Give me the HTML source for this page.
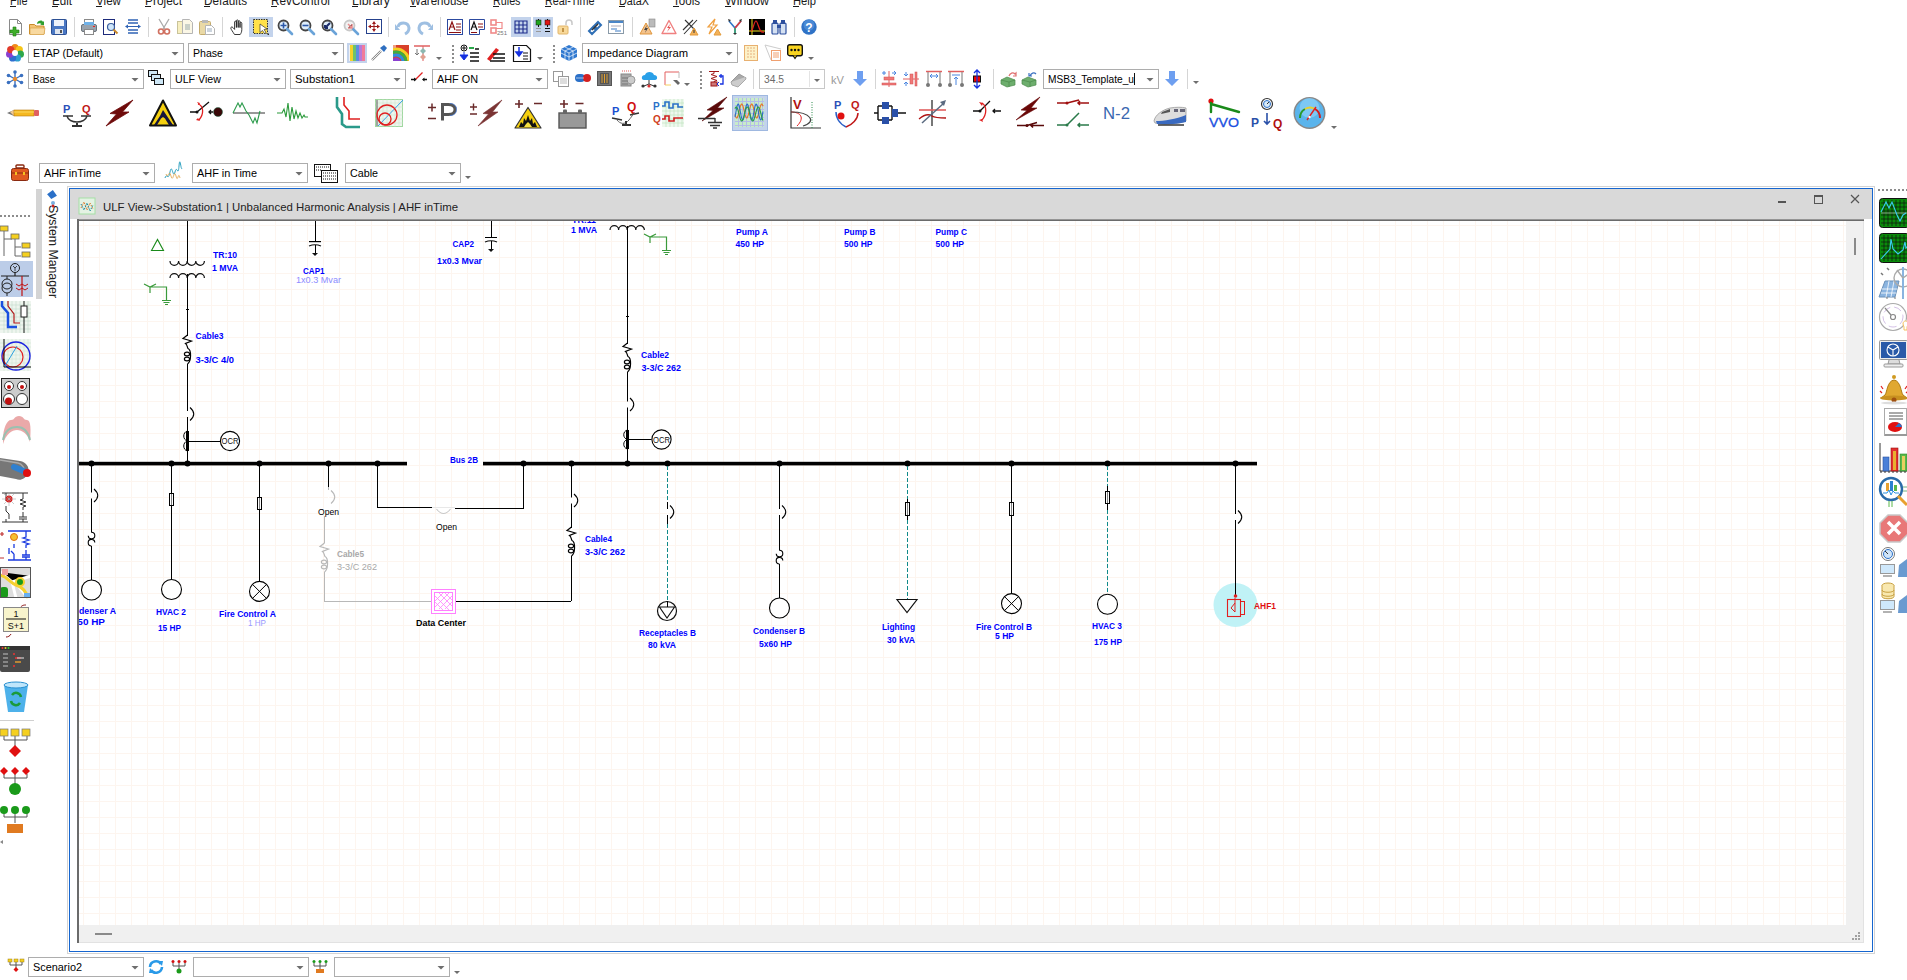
<!DOCTYPE html>
<html><head><meta charset="utf-8"><style>
html,body{margin:0;padding:0;background:#fff;overflow:hidden;width:1907px;height:980px}
svg{display:block;font-family:"Liberation Sans", sans-serif}
</style></head><body>
<svg width="1907" height="980" viewBox="0 0 1907 980">
<text x="10" y="5" font-size="12" fill="#1a1a1a" font-weight="normal" text-anchor="start" textLength="17.5" lengthAdjust="spacingAndGlyphs" >File</text><rect x="10" y="6" width="6" height="1" fill="#1a1a1a"/><text x="52" y="5" font-size="12" fill="#1a1a1a" font-weight="normal" text-anchor="start" textLength="20" lengthAdjust="spacingAndGlyphs" >Edit</text><rect x="52" y="6" width="6" height="1" fill="#1a1a1a"/><text x="96" y="5" font-size="12" fill="#1a1a1a" font-weight="normal" text-anchor="start" textLength="25" lengthAdjust="spacingAndGlyphs" >View</text><rect x="96" y="6" width="6" height="1" fill="#1a1a1a"/><text x="145" y="5" font-size="12" fill="#1a1a1a" font-weight="normal" text-anchor="start" textLength="37" lengthAdjust="spacingAndGlyphs" >Project</text><rect x="145" y="6" width="6" height="1" fill="#1a1a1a"/><text x="204" y="5" font-size="12" fill="#1a1a1a" font-weight="normal" text-anchor="start" textLength="43" lengthAdjust="spacingAndGlyphs" >Defaults</text><rect x="204" y="6" width="6" height="1" fill="#1a1a1a"/><text x="271" y="5" font-size="12" fill="#1a1a1a" font-weight="normal" text-anchor="start" textLength="59" lengthAdjust="spacingAndGlyphs" >RevControl</text><rect x="271" y="6" width="6" height="1" fill="#1a1a1a"/><text x="352" y="5" font-size="12" fill="#1a1a1a" font-weight="normal" text-anchor="start" textLength="38" lengthAdjust="spacingAndGlyphs" >Library</text><rect x="352" y="6" width="6" height="1" fill="#1a1a1a"/><text x="410" y="5" font-size="12" fill="#1a1a1a" font-weight="normal" text-anchor="start" textLength="58.5" lengthAdjust="spacingAndGlyphs" >Warehouse</text><rect x="410" y="6" width="6" height="1" fill="#1a1a1a"/><text x="493" y="5" font-size="12" fill="#1a1a1a" font-weight="normal" text-anchor="start" textLength="27.5" lengthAdjust="spacingAndGlyphs" >Rules</text><rect x="493" y="6" width="6" height="1" fill="#1a1a1a"/><text x="545" y="5" font-size="12" fill="#1a1a1a" font-weight="normal" text-anchor="start" textLength="49.5" lengthAdjust="spacingAndGlyphs" >Real-Time</text><rect x="545" y="6" width="6" height="1" fill="#1a1a1a"/><text x="619" y="5" font-size="12" fill="#1a1a1a" font-weight="normal" text-anchor="start" textLength="30" lengthAdjust="spacingAndGlyphs" >DataX</text><rect x="619" y="6" width="6" height="1" fill="#1a1a1a"/><text x="673" y="5" font-size="12" fill="#1a1a1a" font-weight="normal" text-anchor="start" textLength="27" lengthAdjust="spacingAndGlyphs" >Tools</text><rect x="673" y="6" width="6" height="1" fill="#1a1a1a"/><text x="725" y="5" font-size="12" fill="#1a1a1a" font-weight="normal" text-anchor="start" textLength="44" lengthAdjust="spacingAndGlyphs" >Window</text><rect x="725" y="6" width="6" height="1" fill="#1a1a1a"/><text x="793" y="5" font-size="12" fill="#1a1a1a" font-weight="normal" text-anchor="start" textLength="23" lengthAdjust="spacingAndGlyphs" >Help</text><rect x="793" y="6" width="6" height="1" fill="#1a1a1a"/><g transform="translate(8,19)"><path d="M1.5 .5h8l4 4v11h-12z" fill="#fff" stroke="#8a8a8a"/><path d="M9.5 .5v4h4" fill="none" stroke="#8a8a8a"/><path d="M5 8h3v3h3v3h-3v3h-3v-3h-3v-3h3z" fill="#3fae2a" stroke="#1d7a12" stroke-width=".6"/></g><g transform="translate(29,19)"><path d="M.5 5.5h5l1.5 1.5h8v8h-14.5z" fill="#f3c475" stroke="#c88a2a"/><path d="M1 9h15l-1 6.5h-14z" fill="#f8d9a0" stroke="#d49a3a" stroke-width=".6"/><path d="M8 4c2-3 5-3 6-1l1-1v4h-4l1.5-1c-1-1-3-1-4 0z" fill="#2e9e2e"/></g><g transform="translate(51,19)"><rect x=".5" y=".5" width="15" height="15" rx="1" fill="#4a78c4" stroke="#2b4f93"/><rect x="3" y="1" width="10" height="6" fill="#eef3fb"/><rect x="4" y="10" width="8" height="5" fill="#dfe5ee"/><rect x="9" y="11" width="2" height="3" fill="#555"/></g><rect x="74" y="17" width="1" height="20" fill="#d5d5d5"/><g transform="translate(81,19)"><rect x="3.5" y=".5" width="9" height="5" fill="#fff" stroke="#8a8a8a"/><rect x=".5" y="5.5" width="15" height="7" rx="1.5" fill="#9aa3ad" stroke="#6d747b"/><rect x="3" y="3" width="10" height="3" fill="#6fb1e8"/><rect x="3.5" y="10.5" width="9" height="5" fill="#fff" stroke="#8a8a8a"/><rect x="12" y="7" width="2" height="1" fill="#e22"/></g><g transform="translate(103,19)"><rect x=".5" y=".5" width="11" height="15" fill="#fff" stroke="#1c2a7a"/><circle cx="8" cy="8" r="3.5" fill="#cfe6fb" stroke="#3b5f9e" stroke-width="1.2"/><path d="M10.5 10.5l4 4" stroke="#c98a2c" stroke-width="2"/></g><g transform="translate(125,19)"><path d="M3 1h10M3 4h10M3 11h10M3 14h10" stroke="#2f63b5" stroke-width="1.5"/><path d="M0 7.5l3-2v4zM16 7.5l-3-2v4z" fill="#2f63b5"/><path d="M3 7.5h10" stroke="#2f63b5"/></g><rect x="148" y="17" width="1" height="20" fill="#d5d5d5"/><g transform="translate(157,19)"><path d="M2 0l6 10M12 0l-6 10" stroke="#aaa" stroke-width="1.3"/><circle cx="4" cy="12.5" r="2.5" fill="none" stroke="#d07060" stroke-width="1.6"/><circle cx="10" cy="12.5" r="2.5" fill="none" stroke="#d07060" stroke-width="1.6"/></g><g transform="translate(177,19)"><rect x=".5" y="2.5" width="9" height="12" fill="#f7efc0" stroke="#c9c39a"/><path d="M5.5 .5h7l3 3v11h-10z" fill="#fbf7e6" stroke="#b5b5b5"/><path d="M8 6h5M8 8h5M8 10h5" stroke="#9aa"/></g><g transform="translate(199,19)"><rect x=".5" y="2.5" width="11" height="13" rx="1" fill="#e9d9a6" stroke="#c3ab6d"/><rect x="3" y="1" width="6" height="3" fill="#b9b9b9"/><path d="M6.5 6.5h6l3 3v6h-9z" fill="#fff" stroke="#b5b5b5"/><path d="M8 10h5M8 12h5" stroke="#9ab"/></g><rect x="222" y="17" width="1" height="20" fill="#d5d5d5"/><g transform="translate(230,19)"><path d="M4.5 15.5C3 13 1 10.5.8 9.2c-.2-1.2 1.3-1.6 2.2-.6l1.6 1.8V3c0-1.2 1.8-1.2 1.8 0v5.5V1.8c0-1.2 1.8-1.2 1.8 0v6.7V2.6c0-1.2 1.8-1.2 1.8 0v6V4.2c0-1.2 1.8-1.2 1.8 0v6.3c0 2.5-.8 3.8-1.6 5z" fill="#fff" stroke="#222" stroke-width=".9" stroke-linejoin="round"/></g><rect x="249" y="17" width="24" height="20" fill="#c3d3ec"/><g transform="translate(253,19)"><rect x=".5" y=".5" width="14" height="14" fill="#ffe14a" stroke="#333" stroke-dasharray="1.5 1"/><path d="M7 5l7 5-3 .5 2 3-1.5 1-2-3-2.5 2z" fill="#fff" stroke="#333" stroke-width=".7"/><path d="M14 16l2-2v2z" fill="#333"/></g><g transform="translate(277,19)"><circle cx="6.5" cy="6.5" r="5" fill="#dfeefb" stroke="#454545" stroke-width="1.8"/><path d="M10 10l5 5" stroke="#6aa3d8" stroke-width="2.6" stroke-linecap="round"/><path d="M3.5 6.5h6M6.5 3.5v6" stroke="#2a57a8" stroke-width="1.6"/></g><g transform="translate(299,19)"><circle cx="6.5" cy="6.5" r="5" fill="#dfeefb" stroke="#454545" stroke-width="1.8"/><path d="M10 10l5 5" stroke="#6aa3d8" stroke-width="2.6" stroke-linecap="round"/><path d="M3.5 6.5h6" stroke="#2a57a8" stroke-width="1.6"/></g><g transform="translate(321,19)"><circle cx="6.5" cy="6.5" r="5" fill="#dfeefb" stroke="#454545" stroke-width="1.8"/><path d="M10 10l5 5" stroke="#6aa3d8" stroke-width="2.6" stroke-linecap="round"/><path d="M9 4l-5 5M4 9v-3M4 9h3" stroke="#1b2c6b" stroke-width="2"/></g><g transform="translate(343,19)"><circle cx="6.5" cy="6.5" r="5" fill="#f2f2f2" stroke="#c8c8c8" stroke-width="1.8"/><path d="M10 10l5 5" stroke="#6aa3d8" stroke-width="2.6" stroke-linecap="round"/><path d="M5 5l4 4M9 5v4h-4" stroke="#ec8c8c" stroke-width="1.4"/></g><g transform="translate(366,19)"><rect x=".5" y=".5" width="15" height="14" fill="#fff" stroke="#25418c"/><path d="M8 2l2 3h-4zM8 13l2-3h-4zM2 7.5l3-2v4zM14 7.5l-3-2v4z" fill="#9b1b1b"/><path d="M8 4v7M4 7.5h8" stroke="#9b1b1b"/></g><rect x="388" y="17" width="1" height="20" fill="#d5d5d5"/><g transform="translate(395,19)"><path d="M3 8c1-5 10-6 11 1c0 3-2 5-4 6" fill="none" stroke="#9ebfe2" stroke-width="3"/><path d="M0 5l5 6h-5z" fill="#9ebfe2"/></g><g transform="translate(417,19)"><path d="M13 8c-1-5-10-6-11 1c0 3 2 5 4 6" fill="none" stroke="#9ebfe2" stroke-width="3"/><path d="M16 5l-5 6h5z" fill="#9ebfe2"/></g><rect x="440" y="17" width="1" height="20" fill="#d5d5d5"/><g transform="translate(447,19)"><rect x=".5" y=".5" width="15" height="15" fill="#fff" stroke="#2c4aa0"/><path d="M2 11l3-8 3 8M3 8h4" fill="none" stroke="#8b1010" stroke-width="1.2"/><path d="M9 5h5M9 8h5M9 11h5M2 13.5h12" stroke="#8b1010" stroke-width="1.2"/></g><g transform="translate(469,19)"><path d=".5 .5" /><path d="M.5 .5h15v10h-5v5h-10z" fill="#fff" stroke="#2c4aa0"/><path d="M2 11l3-8 3 8M3 8h4" fill="none" stroke="#111" stroke-width="1.2"/><path d="M9 5h5M9 8h5M2 13.5h6" stroke="#8b1010" stroke-width="1.2"/></g><g transform="translate(490,19)"><rect x="1" y="1" width="5" height="5" fill="none" stroke="#f08a8a" stroke-width="1.6"/><rect x="1" y="9" width="5" height="5" fill="none" stroke="#f08a8a" stroke-width="1.6"/><path d="M6 3.5h6v6h-6" fill="none" stroke="#f08a8a" stroke-width="1.2"/><text x="7" y="16" font-size="6" fill="#777">251</text></g><rect x="511" y="17" width="20" height="20" fill="#c3d3ec"/><g transform="translate(513,19)"><path d="M2 2h12v12h-12zM2 6h12M2 10h12M6 2v12M10 2v12" fill="none" stroke="#1a2a8a" stroke-width="1.1"/></g><rect x="533" y="17" width="20" height="20" fill="#c3d3ec"/><g transform="translate(535,19)"><rect x="1" y="1" width="5" height="5" fill="#1ea51e" stroke="#111" stroke-width=".5"/><rect x="10" y="1" width="5" height="5" fill="#e01515" stroke="#111" stroke-width=".5"/><path d="M3.5 0v1M12.5 0v1M3.5 6v2M12.5 6v2" stroke="#111"/><path d="M1 10l1-1 1 1 1-1 1 1 1-1M1 13l1-1 1 1 1-1 1 1 1-1" stroke="#999" fill="none"/><path d="M10 10l1-1 1 1 1-1 1 1 1-1M10 13l1-1 1 1 1-1 1 1 1-1" stroke="#111" fill="none"/></g><g transform="translate(557,19)"><path d="M9 6v-2c0-4 6-4 6 0v2" fill="none" stroke="#c8c8c8" stroke-width="1.5"/><rect x="1" y="7" width="10" height="8" rx="1" fill="#f8d99a" stroke="#e2b56a"/><rect x="5" y="9" width="2" height="4" fill="#c39448"/></g><rect x="580" y="17" width="1" height="20" fill="#d5d5d5"/><g transform="translate(587,19)"><path d="M2 12l3 3 4-4-3-3zM7 7l3 3 4-4-3-3z" fill="none" stroke="#2f6fb5" stroke-width="2"/><path d="M5 11l6-6" stroke="#333" stroke-width="1.5"/></g><g transform="translate(608,19)"><rect x=".5" y="1.5" width="15" height="13" fill="#fff" stroke="#8a9aa8"/><rect x="1" y="2" width="14" height="2" fill="#4a86c8"/><path d="M3 7h10" stroke="#aab"/><path d="M3 10h6M7 12h6" stroke="#3f7fc8" stroke-width="1.2"/></g><rect x="632" y="17" width="1" height="20" fill="#d5d5d5"/><g transform="translate(639,19)"><path d="M1 15l6-11 6 11z" fill="#f3c28c" stroke="#e0963c" stroke-linejoin="round"/><path d="M8 6l-3 5h2l-1 3 3-5h-2z" fill="#444"/><rect x="10" y="0" width="6" height="8" fill="#bbb" stroke="#888" stroke-width=".6"/></g><g transform="translate(661,19)"><path d="M1 14.5l7-13 7 13z" fill="#fff" stroke="#f08080" stroke-width="1.4" stroke-linejoin="round"/><path d="M9 5l-3 4h2l-2 4 4-5h-2z" fill="#e85050"/></g><g transform="translate(683,19)"><path d="M1 15l13-14M0 11l10-10M2 1l10 10" stroke="#333" stroke-width="1.1"/><path d="M7 16l4-7 4 7z" fill="#f3b25a" stroke="#e39a3a"/><path d="M11 11v3" stroke="#333"/></g><g transform="translate(706,19)"><path d="M9 0l-7 8h4l-3 7 8-9h-4z" fill="none" stroke="#f0a040" stroke-width="1.2"/><path d="M8 16l3.5-6 3.5 6z" fill="#f3b25a" stroke="#e39a3a"/></g><g transform="translate(727,19)"><path d="M8 9l-6-7M8 9l6-7M8 9v6" stroke-width="1.6" fill="none" stroke="#2f76c8"/><path d="M8 9l6-7" stroke="#e03d3d" stroke-width="1.6"/><path d="M8 9v6" stroke="#3da46d" stroke-width="1.6"/><path d="M1 0l3 1-2 2zM15 0l-3 1 2 2zM6 14h4l-2 2z" fill="#333"/></g><g transform="translate(749,19)"><rect x="0" y="0" width="16" height="16" fill="#000"/><path d="M3 0v16M0 12h16" stroke="#f4e020"/><path d="M2 12c2 0 3-10 5-10s3 13 8 11" fill="none" stroke="#e02020" stroke-width="1.2"/></g><g transform="translate(771,19)"><rect x="1" y="4" width="6" height="11" rx="1" fill="#d5e1f2" stroke="#2c4f9e" stroke-width="1.2"/><rect x="9" y="4" width="6" height="11" rx="1" fill="#d5e1f2" stroke="#2c4f9e" stroke-width="1.2"/><rect x="2" y="1" width="4" height="4" fill="#2c4f9e"/><rect x="10" y="1" width="4" height="4" fill="#2c4f9e"/><rect x="6" y="6" width="4" height="3" fill="#2c4f9e"/></g><rect x="794" y="17" width="1" height="20" fill="#d5d5d5"/><g transform="translate(801,19)"><circle cx="8" cy="8" r="7.7" fill="#2f72c6"/><circle cx="8" cy="6" r="5.5" fill="#5c9ae0" opacity=".6"/><text x="8" y="12.5" font-size="12" font-weight="bold" fill="#fff" text-anchor="middle">?</text></g><g transform="translate(6,44)"><circle cx="9.00" cy="3.50" r="3.6" fill="#f08a1a"/><circle cx="13.30" cy="5.57" r="3.6" fill="#f5c518"/><circle cx="14.36" cy="10.22" r="3.6" fill="#2fa84a"/><circle cx="11.39" cy="13.96" r="3.6" fill="#2f9fd0"/><circle cx="6.61" cy="13.96" r="3.6" fill="#2f6fd0"/><circle cx="3.64" cy="10.22" r="3.6" fill="#8a3fd0"/><circle cx="4.70" cy="5.57" r="3.6" fill="#e23a2a"/><circle cx="9" cy="9" r="3" fill="#fff"/></g><rect x="28.5" y="43.5" width="155" height="19" fill="#fff" stroke="#adadad"/><text x="33" y="57" font-size="11" fill="#000" font-weight="normal" text-anchor="start" textLength="70" lengthAdjust="spacingAndGlyphs" >ETAP (Default)</text><path d="M171.5 52 h7 l-3.5 3.5z" fill="#6e6e6e"/><rect x="188.5" y="43.5" width="155" height="19" fill="#fff" stroke="#adadad"/><text x="193" y="57" font-size="11" fill="#000" font-weight="normal" text-anchor="start" textLength="30" lengthAdjust="spacingAndGlyphs" >Phase</text><path d="M331.5 52 h7 l-3.5 3.5z" fill="#6e6e6e"/><rect x="347" y="43" width="20" height="20" fill="#c3d3ec"/><g transform="translate(349,45)"><rect x="0" y="0" width="16" height="16" fill="#f0f0f0"/><rect x="1" y="0" width="3" height="16" fill="#f4d22a"/><rect x="4" y="0" width="3" height="16" fill="#6dc36d"/><rect x="7" y="0" width="3" height="16" fill="#5a8fe0"/><rect x="10" y="0" width="3" height="16" fill="#b77ad8"/><rect x="13" y="0" width="3" height="16" fill="#f07b9a"/></g><g transform="translate(371,45)"><path d="M1 15l9-9" stroke="#888" stroke-width="2.4"/><path d="M1 15l9-9" stroke="#eee" stroke-width="1"/><path d="M9 3l4-3 3 3-3 4z" fill="#2f6fc0"/></g><clipPath id="rb"><rect x="393" y="45" width="16" height="16"/></clipPath><g clip-path="url(#rb)"><g transform="translate(393,45)"><rect x="0" y="0" width="16" height="16" fill="#d8402a"/><circle cx="3" cy="17" r="13" fill="none" stroke="#f5d020" stroke-width="3"/><circle cx="3" cy="17" r="10" fill="none" stroke="#3fae3f" stroke-width="3"/><circle cx="3" cy="17" r="7" fill="none" stroke="#2f8fe0" stroke-width="3"/><circle cx="3" cy="17" r="4.5" fill="#8a3fd0"/><path d="M0 0h3v3h-3z" fill="#f0a080"/></g></g><g transform="translate(414,45)"><path d="M0 1h16" stroke="#e06060" stroke-width="1.5"/><path d="M9 1v15" stroke="#e06060"/><path d="M9 3l3 3-3 3-3-3z" fill="#8cb8b0"/><path d="M9 9l3 3-3 3-3-3z" fill="#e0a090"/><path d="M3 4v6M1 8l2 2 2-2" stroke="#777" fill="none"/></g><path d="M436 57 h6 l-3 3z" fill="#6e6e6e"/><rect x="452" y="45" width="2" height="2" fill="#8c8c8c"/><rect x="452" y="49" width="2" height="2" fill="#8c8c8c"/><rect x="452" y="53" width="2" height="2" fill="#8c8c8c"/><rect x="452" y="57" width="2" height="2" fill="#8c8c8c"/><rect x="452" y="61" width="2" height="2" fill="#8c8c8c"/><g transform="translate(460,44)"><circle cx="4" cy="4" r="3" fill="none" stroke="#111"/><path d="M4 2v4M2 4h4" stroke="#111"/><path d="M9 4h5" stroke="#2aa84a" stroke-width="2"/><path d="M15 5h4M10 9h9M10 13h9M10 17h9" stroke="#111" stroke-width="1.5"/><path d="M4 8v5M0 11l4 5 4-5z" fill="#1530e0" stroke="#1530e0"/></g><g transform="translate(486,45)"><path d="M1 14l9-11 3 2-9 11z" fill="#e02020"/><path d="M7 9h12M7 13h12M4 16h15" stroke="#111" stroke-width="1.6"/></g><g transform="translate(513,45)"><path d="M.5 .5h13l4 4v12h-17z" fill="#fff" stroke="#111" stroke-width="1.2"/><path d="M6 2v7M3 7l3 4 3-4z" fill="#1530e0" stroke="#1530e0" stroke-width="1.5"/><path d="M10 8h5M10 11h5M10 14h5" stroke="#111"/></g><path d="M537 57 h6 l-3 3z" fill="#6e6e6e"/><rect x="553" y="45" width="2" height="2" fill="#8c8c8c"/><rect x="553" y="49" width="2" height="2" fill="#8c8c8c"/><rect x="553" y="53" width="2" height="2" fill="#8c8c8c"/><rect x="553" y="57" width="2" height="2" fill="#8c8c8c"/><rect x="553" y="61" width="2" height="2" fill="#8c8c8c"/><g transform="translate(561,45)"><path d="M8 0l8 4v8l-8 4-8-4v-8z" fill="#2f78d0"/><path d="M0 4l8 4 8-4M8 8v8M4 2l8 4v8M12 2l-8 4v8M0 8l8 4 8-4" stroke="#fff" stroke-width=".7" fill="none"/></g><rect x="582.5" y="43.5" width="155" height="19" fill="#fff" stroke="#adadad"/><text x="587" y="57" font-size="11" fill="#000" font-weight="normal" text-anchor="start" textLength="101" lengthAdjust="spacingAndGlyphs" >Impedance Diagram</text><path d="M725.5 52 h7 l-3.5 3.5z" fill="#6e6e6e"/><g transform="translate(744,45)"><rect x=".5" y=".5" width="13" height="15" fill="#fdf2c8" stroke="#e8b070"/><path d="M3 3h8M3 6h8M3 9h8M3 12h8" stroke="#e6b080" stroke-dasharray="2 1"/></g><g transform="translate(765,45)"><path d="M0 0l16 4" stroke="#ccc"/><path d="M0 0l6 15" stroke="#ccc"/><rect x="6.5" y="5.5" width="9" height="10" fill="#fff" stroke="#f0a070"/><path d="M8 8h6M8 10h6M8 12h6" stroke="#f0a070"/></g><g transform="translate(787,44)"><rect x=".7" y=".7" width="14.6" height="11" rx="2" fill="#f8d420" stroke="#111" stroke-width="1.4"/><path d="M6 11.5l2 3 2-3" fill="#f8d420" stroke="#111" stroke-width="1.2"/><circle cx="4.5" cy="6" r="1.2" fill="#111"/><circle cx="8" cy="6" r="1.2" fill="#111"/><circle cx="11.5" cy="6" r="1.2" fill="#111"/></g><path d="M808 57 h6 l-3 3z" fill="#6e6e6e"/><g transform="translate(6,70)"><path d="M9 1v16M2 5l14 8M16 5l-14 8" stroke="#3a70c0" stroke-width="1.4"/><circle cx="9" cy="9" r="2.2" fill="#e68a2e"/><circle cx="9" cy="2" r="1.8" fill="#3a70c0"/><circle cx="9" cy="16" r="1.8" fill="#3a70c0"/><circle cx="2.5" cy="5.5" r="1.8" fill="#3a70c0"/><circle cx="15.5" cy="5.5" r="1.8" fill="#3a70c0"/><circle cx="2.5" cy="12.5" r="1.8" fill="#3a70c0"/><circle cx="15.5" cy="12.5" r="1.8" fill="#3a70c0"/></g><rect x="28.5" y="69.5" width="115" height="19" fill="#fff" stroke="#adadad"/><text x="33" y="83" font-size="11" fill="#000" font-weight="normal" text-anchor="start" textLength="22" lengthAdjust="spacingAndGlyphs" >Base</text><path d="M131.5 78 h7 l-3.5 3.5z" fill="#6e6e6e"/><g transform="translate(148,70)"><rect x=".5" y=".5" width="9" height="6" fill="#cde6f5" stroke="#111"/><rect x="3.5" y="4.5" width="9" height="6" fill="#cde6f5" stroke="#111"/><rect x="6.5" y="8.5" width="9" height="6" fill="#cde6f5" stroke="#111"/></g><rect x="170.5" y="69.5" width="115" height="19" fill="#fff" stroke="#adadad"/><text x="175" y="83" font-size="11" fill="#000" font-weight="normal" text-anchor="start" textLength="46" lengthAdjust="spacingAndGlyphs" >ULF View</text><path d="M273.5 78 h7 l-3.5 3.5z" fill="#6e6e6e"/><rect x="290.5" y="69.5" width="115" height="19" fill="#fff" stroke="#adadad"/><text x="295" y="83" font-size="11" fill="#000" font-weight="normal" text-anchor="start" textLength="60" lengthAdjust="spacingAndGlyphs" >Substation1</text><path d="M393.5 78 h7 l-3.5 3.5z" fill="#6e6e6e"/><g transform="translate(411,71)"><path d="M0 8.5h5M12 8.5h4" stroke="#111" stroke-width="1.3"/><path d="M4.5 8.5l7-7" stroke="#e02020" stroke-width="1.2"/><path d="M3 6.5l2.5 2-2.5 2zM11 8.5l2.5-2v4z" fill="#111"/></g><rect x="432.5" y="69.5" width="115" height="19" fill="#fff" stroke="#adadad"/><text x="437" y="83" font-size="11" fill="#000" font-weight="normal" text-anchor="start" textLength="41" lengthAdjust="spacingAndGlyphs" >AHF ON</text><path d="M535.5 78 h7 l-3.5 3.5z" fill="#6e6e6e"/><g transform="translate(553,71)"><rect x=".5" y=".5" width="9" height="10" fill="#fff" stroke="#999"/><rect x="5.5" y="5.5" width="10" height="10" fill="#fff" stroke="#999"/><path d="M7 8h7M7 10h7M7 12h7" stroke="#bbb"/></g><g transform="translate(575,72)"><rect x="0" y="2" width="10" height="8" rx="4" fill="#2a70c8"/><circle cx="12" cy="6" r="4" fill="#d42020"/><path d="M1 6h8" stroke="#fff" stroke-width=".6"/></g><g transform="translate(597,71)"><rect x=".5" y=".5" width="14" height="14" fill="#777" stroke="#555"/><rect x="3" y="2" width="9" height="11" fill="#555"/><path d="M5 3v9M7.5 3v9M10 3v9" stroke="#e0a030"/></g><g transform="translate(620,71)"><path d="M2 0h10" stroke="#e36060" stroke-dasharray="1 1"/><rect x="1" y="3" width="10" height="12" fill="#aaa" stroke="#888"/><circle cx="11" cy="9" r="4" fill="#ccc" stroke="#999"/><path d="M2 7h6M2 10h6M2 13h6" stroke="#777"/></g><g transform="translate(641,71)"><path d="M3 9c-3 0-3-5 1-5 1-4 8-4 9 0 4 0 4 5 1 5z" fill="#2aa0e8"/><path d="M8 9v4M8 13l-5 2M8 13l5 2" stroke="#333"/><circle cx="2" cy="15" r="1.6" fill="#333"/><circle cx="8" cy="15" r="1.6" fill="#d33"/><circle cx="14" cy="15" r="1.6" fill="#333"/></g><g transform="translate(664,71)"><path d="M1 14v-13h14" fill="none" stroke="#e36060" stroke-width="1"/><path d="M1 14h6" stroke="#f5d060"/><path d="M15 1v6" stroke="#bbb"/><path d="M9 9l5 5 2-2-3-3z" fill="#666"/></g><path d="M684 83 h6 l-3 3z" fill="#6e6e6e"/><rect x="700" y="71" width="2" height="2" fill="#8c8c8c"/><rect x="700" y="75" width="2" height="2" fill="#8c8c8c"/><rect x="700" y="79" width="2" height="2" fill="#8c8c8c"/><rect x="700" y="83" width="2" height="2" fill="#8c8c8c"/><rect x="700" y="87" width="2" height="2" fill="#8c8c8c"/><g transform="translate(708,71)"><path d="M1 .5h10M6 .5v2l-3 1 6 2-6 2 6 2-3 1v2" stroke="#a01818" fill="none"/><rect x="3" y="11" width="6" height="4" fill="#c77" stroke="#a01818"/><path d="M11 5h4v8h-3M13 3v4M11 5h4" stroke="#1530e0" fill="none" stroke-width="1.3"/><path d="M11 11l-2 2 2 2" stroke="#1530e0" fill="none"/></g><g transform="translate(730,72)"><path d="M1 10l8-8 7 4-8 8z" fill="#aaa" stroke="#999"/><path d="M1 10l1 3 6 2 8-8-.5-2" fill="#ccc" stroke="#aaa"/></g><rect x="753" y="69" width="1" height="20" fill="#d5d5d5"/><rect x="759.5" y="69.5" width="65" height="19" fill="#fff" stroke="#c8c8c8"/><rect x="809" y="71" width="1" height="16" fill="#e4e4e4"/><text x="764" y="83" font-size="11" fill="#6a6a6a" font-weight="normal" text-anchor="start" textLength="20" lengthAdjust="spacingAndGlyphs" >34.5</text><path d="M814 79 h6 l-3 3z" fill="#6e6e6e"/><text x="831" y="84" font-size="11" fill="#9a9a9a" font-weight="normal" text-anchor="start" textLength="13" lengthAdjust="spacingAndGlyphs" >kV</text><g transform="translate(853,71)"><path d="M4 0h6v8h4l-7 7-7-7h4z" fill="#6e9ff0"/></g><rect x="875" y="69" width="1" height="20" fill="#d5d5d5"/><g transform="translate(882,71)"><path d="M7 0v16" stroke="#e06060"/><rect x="2" y="6" width="10" height="3" fill="#f07878" stroke="#d05050" stroke-width=".5"/><rect x="0" y="12" width="14" height="2" fill="#f07878" stroke="#d05050" stroke-width=".5"/><path d="M0 2h4M2 0v4M10 2h4M12 0l2 2-2 2" stroke="#4a86e0" fill="none"/></g><g transform="translate(903,71)"><path d="M0 8h16" stroke="#e06060"/><rect x="7" y="3" width="3" height="10" fill="#f07878" stroke="#d05050" stroke-width=".5"/><rect x="12" y="1" width="2" height="14" fill="#f07878" stroke="#d05050" stroke-width=".5"/><path d="M3 1v4M1 3l2 2 2-2M3 15v-4M1 13l2-2 2 2" stroke="#4a86e0" fill="none"/></g><g transform="translate(926,71)"><path d="M0 .5h16" stroke="#e06060" stroke-width="1.5"/><path d="M2 1v12M14 1v12" stroke="#777"/><circle cx="2" cy="14" r="2" fill="#777"/><circle cx="14" cy="14" r="2" fill="#777"/><path d="M4 5h8M4 5l2-2M4 5l2 2M12 5l-2-2M12 5l-2 2" stroke="#4a86e0" fill="none"/></g><g transform="translate(948,71)"><path d="M0 .5h16" stroke="#e06060" stroke-width="1.5"/><path d="M2 1v12M14 1v12" stroke="#777"/><circle cx="2" cy="14" r="2" fill="#777"/><circle cx="14" cy="14" r="2" fill="#777"/><path d="M4 4h8M8 14v-8M6 8l2-2 2 2" stroke="#4a86e0" fill="none"/></g><g transform="translate(972,70)"><rect x="1.5" y="6" width="7" height="6" fill="#e00" stroke="#111"/><path d="M5 0v18M2 3l3-3 3 3M2 15l3 3 3-3" stroke="#1530e0" fill="none" stroke-width="1.3"/></g><rect x="993" y="69" width="1" height="20" fill="#d5d5d5"/><g transform="translate(1001,72)"><path d="M0 8l6-3 8 3v5l-8 2-6-3z" fill="#6dae6d" stroke="#4a8a4a" stroke-width=".7"/><path d="M0 8l8 2 6-2M8 10v5" stroke="#4a8a4a" fill="none" stroke-width=".7"/><path d="M8 4c1-3 4-4 6-2l1-1v3h-3" stroke="#e07070" fill="none" stroke-width="1.2"/></g><g transform="translate(1022,72)"><path d="M0 8l6-3 8 3v5l-8 2-6-3z" fill="#6dae6d" stroke="#4a8a4a" stroke-width=".7"/><path d="M0 8l8 2 6-2M8 10v5" stroke="#4a8a4a" fill="none" stroke-width=".7"/><path d="M8 4c1-3 4-4 6-2M7 1v3h3" stroke="#3a70c0" fill="none" stroke-width="1.2"/></g><rect x="1043.5" y="69.5" width="115" height="19" fill="#fff" stroke="#adadad"/><text x="1048" y="83" font-size="11" fill="#000" font-weight="normal" text-anchor="start" textLength="86" lengthAdjust="spacingAndGlyphs" >MSB3_Template_u</text><path d="M1146.5 78 h7 l-3.5 3.5z" fill="#6e6e6e"/><rect x="1134" y="73" width="1" height="12" fill="#111"/><g transform="translate(1166,71)"><path d="M3 0h6v8h4l-7 7-7-7h4z" fill="#6e9ff0"/></g><rect x="1187" y="69" width="1" height="20" fill="#d5d5d5"/><path d="M1193 81 h6 l-3 3z" fill="#6e6e6e"/><g transform="translate(11,165)"><rect x="5" y="0" width="8" height="3" rx="1" fill="none" stroke="#8a2a10" stroke-width="1.4"/><rect x=".5" y="3.5" width="17" height="12" rx="2" fill="#e05a20" stroke="#8a2a10"/><path d="M1 8h16" stroke="#8a2a10"/><rect x="4" y="7" width="2" height="3" fill="#f5c020"/><rect x="12" y="7" width="2" height="3" fill="#f5c020"/></g><rect x="39.5" y="163.5" width="115" height="19" fill="#fff" stroke="#adadad"/><text x="44" y="177" font-size="11" fill="#000" font-weight="normal" text-anchor="start" textLength="57" lengthAdjust="spacingAndGlyphs" >AHF inTime</text><path d="M142.5 172 h7 l-3.5 3.5z" fill="#6e6e6e"/><g transform="translate(165,166)"><path d="M0 12c2-6 3 4 5-6s3 8 5 0 3 6 4-6 2 6 3 2" fill="none" stroke="#2aa0c0" stroke-width="1"/><path d="M1 8c2 6 3-6 5 2s3-8 5 0 2-6 4 2" fill="none" stroke="#e0a040" stroke-width=".8"/></g><rect x="192.5" y="163.5" width="115" height="19" fill="#fff" stroke="#adadad"/><text x="197" y="177" font-size="11" fill="#000" font-weight="normal" text-anchor="start" textLength="60" lengthAdjust="spacingAndGlyphs" >AHF in Time</text><path d="M295.5 172 h7 l-3.5 3.5z" fill="#6e6e6e"/><g transform="translate(314,164)"><rect x=".5" y=".5" width="16" height="12" fill="#fff" stroke="#111"/><rect x="7.5" y="6.5" width="16" height="12" fill="#fff" stroke="#111"/><path d="M2 3h13M2 6h5M9 9h13M9 12h13M9 15h13" stroke="#111" stroke-dasharray="1 1"/></g><rect x="345.5" y="163.5" width="115" height="19" fill="#fff" stroke="#adadad"/><text x="350" y="177" font-size="11" fill="#000" font-weight="normal" text-anchor="start" textLength="28" lengthAdjust="spacingAndGlyphs" >Cable</text><path d="M448.5 172 h7 l-3.5 3.5z" fill="#6e6e6e"/><path d="M465 176 h6 l-3 3z" fill="#6e6e6e"/><rect x="28.5" y="957.5" width="115" height="19" fill="#fff" stroke="#adadad"/><text x="33" y="971" font-size="11" fill="#000" font-weight="normal" text-anchor="start" textLength="49" lengthAdjust="spacingAndGlyphs" >Scenario2</text><path d="M131.5 966 h7 l-3.5 3.5z" fill="#6e6e6e"/><g transform="translate(8,959)"><rect x="0" y="0" width="4" height="3" fill="#f5d020" stroke="#a08010" stroke-width=".5"/><rect x="6" y="0" width="4" height="3" fill="#f5d020" stroke="#a08010" stroke-width=".5"/><rect x="12" y="0" width="4" height="3" fill="#f5d020" stroke="#a08010" stroke-width=".5"/><path d="M2 3v3h12v-3M8 3v6" stroke="#555" fill="none"/><path d="M8 8l2.5 2.5-2.5 2.5-2.5-2.5z" fill="#e01010"/></g><g transform="translate(148,959)"><path d="M2 8a6 6 0 0 1 11-3M14 8a6 6 0 0 1-11 3" fill="none" stroke="#2a9ae8" stroke-width="2.6"/><path d="M10 2l5 0-1 5zM6 14h-5l1-5z" fill="#2a9ae8"/></g><g transform="translate(171,960)"><circle cx="2" cy="1.5" r="1.5" fill="#d01010"/><circle cx="8" cy="1.5" r="1.5" fill="#d01010"/><circle cx="14" cy="1.5" r="1.5" fill="#d01010"/><path d="M2 3v3h12v-3M8 3v6" stroke="#555" fill="none"/><circle cx="8" cy="11" r="2.5" fill="#1a9a1a"/></g><rect x="193.5" y="957.5" width="115" height="19" fill="#fff" stroke="#adadad"/><path d="M296.5 966 h7 l-3.5 3.5z" fill="#6e6e6e"/><g transform="translate(312,960)"><circle cx="2" cy="1.5" r="1.5" fill="#1a9a1a"/><circle cx="8" cy="1.5" r="1.5" fill="#1a9a1a"/><circle cx="14" cy="1.5" r="1.5" fill="#1a9a1a"/><path d="M2 3v3h12v-3M8 3v6" stroke="#555" fill="none"/><rect x="4" y="9" width="8" height="4" fill="#e07a20"/></g><rect x="334.5" y="957.5" width="115" height="19" fill="#fff" stroke="#adadad"/><path d="M437.5 966 h7 l-3.5 3.5z" fill="#6e6e6e"/><path d="M454 971 h6 l-3 3z" fill="#6e6e6e"/><g transform="translate(7,109)"><path d="M0 4l7-3v6z" fill="#777"/><path d="M3 3l4-2v6z" fill="#f0c890"/><rect x="7" y="1" width="20" height="6" fill="#f5b820" stroke="#b87a10" stroke-width=".6"/><path d="M7 3h20" stroke="#fbd860"/><rect x="27" y="1" width="5" height="6" rx="1" fill="#e06060"/></g><g transform="translate(63,104)"><text x="0" y="9" font-size="11" font-weight="bold" fill="#2a50b8">P</text><text x="19" y="9" font-size="11" font-weight="bold" fill="#c01818">Q</text><path d="M0 12h10M18 12h10" stroke="#333" stroke-width="1.5"/><path d="M4 12c2 8 18 8 20 0" fill="none" stroke="#333" stroke-width="1.5"/><path d="M14 19v3M9 22h10" stroke="#333" stroke-width="2"/></g><g transform="translate(106,100)"><path d="M27 0L4 13.5L10.5 14L0 26L23 12L16.5 12z" fill="#6e0a0a" stroke="#6e0a0a" stroke-width=".8" stroke-linejoin="round"/></g><g transform="translate(149,99)"><path d="M14 1.5L27 26.5H1z" fill="#f5d010" stroke="#111" stroke-width="2" stroke-linejoin="round"/><path d="M5 26L9 20L11 17L13 13L14 11L16 14L18 17L20 20L24 26H20L17.5 22L16 19.5L14 18L12 19.5L10.5 22L8 26z" fill="#14143a"/></g><g transform="translate(190,100)"><path d="M0 12h7M7 12l12-10" stroke="#111" stroke-width="1.3"/><circle cx="7" cy="12" r="1.5" fill="#111"/><path d="M8 4c6 2 6 10 1 16" stroke="#e02020" fill="none" stroke-width="1.3"/><path d="M7 2l3 1-1 2zM6 20l4 1-2-3z" fill="#e02020"/><path d="M19 12h4M21 10l-2 2 2 2" stroke="#111" fill="none" stroke-width="1.3"/><circle cx="28" cy="12" r="4.5" fill="#3a0808" stroke="#1a6a4a" stroke-width=".5"/></g><g transform="translate(233,102)"><path d="M0 11h32" stroke="#333" stroke-width="1"/><path d="M0 11l5-10 2 4 2-4 4 8 3 4 4 8 2-5 2 5 3-12" fill="none" stroke="#2a9a4a" stroke-width="1.1"/></g><g transform="translate(277,102)"><path d="M0 11h5l2-4 2 8 2-14 2 18 2-14 2 12 2-8 2 7 2-5 2 5 2-3 1 2h3" fill="none" stroke="#2a9a3a" stroke-width="1.1"/></g><g transform="translate(335,97)"><path d="M2 0v10l5 7v10l4 3h14" fill="none" stroke="#2a9a8a" stroke-width="2.6"/><path d="M9 0v8l5 6v8h11" fill="none" stroke="#e02020" stroke-width="1.6"/></g><g transform="translate(375,99)"><rect x=".5" y=".5" width="27" height="27" fill="#eef6ee" stroke="#a0d8a0"/><path d="M0 4h28M0 8h28M0 12h28M0 16h28M0 20h28M0 24h28M4 0v28M8 0v28M12 0v28M16 0v28M20 0v28M24 0v28" stroke="#c8e0c8" stroke-width=".5"/><path d="M2 1v26" stroke="#555"/><path d="M3 27l25-26" stroke="#3aa0e8"/><circle cx="12" cy="16" r="10" fill="none" stroke="#e02020" stroke-width="1.3"/><circle cx="10" cy="20" r="6" fill="none" stroke="#e02020" stroke-width="1.3"/></g><g transform="translate(427,103)"><path d="M1 4.5h8M5 .5v8M1 15.5h8" stroke="#6a2a2a" stroke-width="1.5"/><path d="M15.5 17.5V1.5h6c4.5 0 6.5 2.2 6.5 5s-2 5-6.5 5h-6" fill="none" stroke="#555" stroke-width="3"/><path d="M23 .5c4 0 6.5 2.5 6.5 6s-2.5 6-6.5 6" fill="none" stroke="#3a70d0" stroke-width=".8"/></g><g transform="translate(470,100)"><path d="M0 7h7M3.5 3.5v7M0 14h7" stroke="#6a2a2a" stroke-width="1.4"/><path d="M32 0L13 13.5L18.5 14L8 26L28 12L22.5 12z" fill="#7a3434" stroke="#7a3434" stroke-width=".6" stroke-linejoin="round"/></g><g transform="translate(514,100)"><path d="M1 4h8M5 0v8M20 3.5h8" stroke="#6a2a2a" stroke-width="1.6"/><path d="M14 7.5L27 28H1z" fill="#f5d010" stroke="#333" stroke-width="1.2" stroke-linejoin="round"/><path d="M5 27L7 22L9 24L10 18L12 21L14 15L16 21L18 18L19 24L21 22L23 27z" fill="#111"/><path d="M10 27L12 24L14 22L16 24L18 27z" fill="#f5e040"/></g><g transform="translate(558,100)"><path d="M2 4h8M6 0v8M17.5 3.5h8" stroke="#6a2a2a" stroke-width="1.6"/><rect x="1" y="13" width="27" height="15" fill="#999" stroke="#555" stroke-width="1.4"/><rect x="5" y="9.5" width="4" height="4" rx="1" fill="#666"/><rect x="20" y="9.5" width="4" height="4" rx="1" fill="#666"/></g><g transform="translate(612,100)"><text x="0" y="15" font-size="11" font-weight="bold" fill="#1a50d0">P</text><text x="15" y="11" font-size="12" font-weight="bold" fill="#d01010">Q</text><path d="M0 18l10 2M18 15l9-2" stroke="#333" stroke-width="1.6"/><path d="M5 20c3 4 8 5 12 0s4-6 6-7" fill="none" stroke="#666" stroke-width="1"/><path d="M14 21v3M10 25h9" stroke="#333" stroke-width="2"/></g><g transform="translate(653,98)"><rect x="9" y="1" width="22" height="28" fill="#eef8ee"/><path d="M9 5h22M9 9h22M9 13h22M9 17h22M9 21h22M9 25h22M13 1v28M17 1v28M21 1v28M25 1v28M29 1v28" stroke="#b8e0b8" stroke-width=".6"/><text x="0" y="12" font-size="10" font-weight="bold" fill="#2a70c8">P</text><text x="0" y="25" font-size="10" font-weight="bold" fill="#d04020">Q</text><path d="M9 8h3v-4h4v6h4v-4h5v3h5" fill="none" stroke="#2a70c8" stroke-width="1.6"/><path d="M9 21h3v-3h4v5h5v-3h9" fill="none" stroke="#d02020" stroke-width="1.6"/></g><g transform="translate(698,97)"><path d="M29 0L9 13L15 13.5L4 24L26 11L19.5 11z" fill="#5a0a0a" stroke="#5a0a0a" stroke-width=".6" stroke-linejoin="round"/><path d="M0 21.5h17M17 21v4M10 25.5h14M12 28.5h10M15 31h4" stroke="#333" stroke-width="1.4"/></g><rect x="732" y="95" width="36" height="36" fill="#c3d3ec"/><rect x="732.5" y="95.5" width="35" height="35" fill="none" stroke="#9fb8e0"/><g transform="translate(735,98)"><rect x="0" y="0" width="29" height="29" fill="#c8ecc8"/><path d="M0 3.5h29M0 7.5h29M0 11.5h29M0 15.5h29M0 19.5h29M0 23.5h29M0 27.5h29M3.5 0v29M7.5 0v29M11.5 0v29M15.5 0v29M19.5 0v29M23.5 0v29M27.5 0v29" stroke="#b4bce8" stroke-width="1"/><polyline points="0.0,16.4 0.5,18.1 1.0,19.3 1.5,19.9 2.0,19.9 2.5,19.1 3.0,17.8 3.5,16.0 4.0,13.9 4.5,11.7 5.0,9.6 5.5,7.9 6.0,6.7 6.5,6.1 7.0,6.1 7.5,6.9 8.0,8.2 8.5,10.0 9.0,12.1 9.5,14.3 10.0,16.4 10.5,18.1 11.0,19.3 11.5,19.9 12.0,19.9 12.5,19.1 13.0,17.8 13.5,16.0 14.0,13.9 14.5,11.7 15.0,9.6 15.5,7.9 16.0,6.7 16.5,6.1 17.0,6.1 17.5,6.9 18.0,8.2 18.5,10.0 19.0,12.1 19.5,14.3 20.0,16.4 20.5,18.1 21.0,19.3 21.5,19.9 22.0,19.9 22.5,19.1 23.0,17.8 23.5,16.0 24.0,13.9 24.5,11.7 25.0,9.6 25.5,7.9 26.0,6.7 26.5,6.1 27.0,6.1 27.5,6.9 28.0,8.2" fill="none" stroke="#e87a20" stroke-width="1.1"/><polyline points="0.0,18.8 0.5,16.3 1.0,13.5 1.5,10.8 2.0,8.5 2.5,6.9 3.0,6.1 3.5,6.2 4.0,7.3 4.5,9.2 5.0,11.7 5.5,14.5 6.0,17.2 6.5,19.5 7.0,21.1 7.5,21.9 8.0,21.8 8.5,20.7 9.0,18.8 9.5,16.3 10.0,13.5 10.5,10.8 11.0,8.5 11.5,6.9 12.0,6.1 12.5,6.2 13.0,7.3 13.5,9.2 14.0,11.7 14.5,14.5 15.0,17.2 15.5,19.5 16.0,21.1 16.5,21.9 17.0,21.8 17.5,20.7 18.0,18.8 18.5,16.3 19.0,13.5 19.5,10.8 20.0,8.5 20.5,6.9 21.0,6.1 21.5,6.2 22.0,7.3 22.5,9.2 23.0,11.7 23.5,14.5 24.0,17.2 24.5,19.5 25.0,21.1 25.5,21.9 26.0,21.8 26.5,20.7 27.0,18.8 27.5,16.3 28.0,13.5" fill="none" stroke="#2a70c8" stroke-width="1.1"/><polyline points="0.0,10.7 0.5,9.6 1.0,9.1 1.5,9.1 2.0,9.6 2.5,10.7 3.0,12.2 3.5,14.0 4.0,16.0 4.5,18.0 5.0,19.8 5.5,21.3 6.0,22.4 6.5,22.9 7.0,22.9 7.5,22.4 8.0,21.3 8.5,19.8 9.0,18.0 9.5,16.0 10.0,14.0 10.5,12.2 11.0,10.7 11.5,9.6 12.0,9.1 12.5,9.1 13.0,9.6 13.5,10.7 14.0,12.2 14.5,14.0 15.0,16.0 15.5,18.0 16.0,19.8 16.5,21.3 17.0,22.4 17.5,22.9 18.0,22.9 18.5,22.4 19.0,21.3 19.5,19.8 20.0,18.0 20.5,16.0 21.0,14.0 21.5,12.2 22.0,10.7 22.5,9.6 23.0,9.1 23.5,9.1 24.0,9.6 24.5,10.7 25.0,12.2 25.5,14.0 26.0,16.0 26.5,18.0 27.0,19.8 27.5,21.3 28.0,22.4" fill="none" stroke="#2a9a4a" stroke-width="1.1"/></g><g transform="translate(790,97)"><path d="M1 0v31h30" stroke="#333" fill="none" stroke-width="1.2"/><text x="3" y="12" font-size="13" font-weight="bold" fill="#b01010">V</text><path d="M1 15c10 0 14 6 6 14" fill="none" stroke="#e02020" stroke-width="1"/><path d="M1 15c20 0 26 10 12 14" fill="none" stroke="#444" stroke-width="1.2"/><path d="M22 5v26" stroke="#2a8a4a" stroke-dasharray="1 1.5"/></g><g transform="translate(834,99)"><text x="0" y="10" font-size="11" font-weight="bold" fill="#2a50b8">P</text><text x="17" y="10" font-size="11" font-weight="bold" fill="#c01818">Q</text><path d="M2 13c0 8 6 13 10 15" fill="none" stroke="#2a60c8" stroke-width="1.5"/><path d="M12 28c6-2 12-8 12-14" fill="none" stroke="#c01818" stroke-width="1.5"/><circle cx="7" cy="17" r="3.5" fill="#e01010"/></g><g transform="translate(874,102)"><path d="M0 11h4M4 4v14M4 4h14M4 18h14M18 4v14M24 11h8" stroke="#111" stroke-width="1.4" fill="none"/><rect x="8" y="0" width="7" height="7" fill="#2a50a8"/><rect x="8" y="15" width="7" height="7" fill="#2a50a8"/><rect x="18" y="7" width="6" height="8" fill="#2a50a8"/></g><g transform="translate(919,100)"><path d="M13 0v26" stroke="#555" stroke-width="1.6"/><path d="M0 10h27" stroke="#e06060" stroke-width="1.6"/><path d="M0 19c6-5 10-5 13-3s9 2 14 2" stroke="#b01010" fill="none" stroke-width="1.3"/><path d="M3 23l22-20" stroke="#5a6a80" stroke-width="1.5"/><path d="M21 2l6-2-2 6z" fill="#5a6a80"/></g><g transform="translate(973,101)"><path d="M0 10h7M7 10l10-10" stroke="#111" stroke-width="1.3"/><circle cx="7" cy="10" r="1.5" fill="#111"/><path d="M9 2c5 3 5 11 0 17" stroke="#e02020" fill="none" stroke-width="1.3"/><path d="M6 1l4 1-1 3zM6 19l4 2-1-3z" fill="#e02020"/><path d="M20 10h8M22 8l-2 2 2 2" stroke="#111" fill="none" stroke-width="1.3"/></g><g transform="translate(1015,97)"><path d="M25 0L6 13L12 13.5L1 23L22 11L16 11z" fill="#6a0808" stroke="#6a0808" stroke-width=".6" stroke-linejoin="round"/><path d="M2 28.5h10M12 28.5l10-3M17 28.5h12M18 26.5l-2 2 2 2" stroke="#5a0a0a" stroke-width="1.6" fill="none"/><circle cx="12" cy="28.5" r="1.5" fill="#5a0a0a"/></g><g transform="translate(1057,100)"><path d="M0 3h10M10 3l12-3M22 3h10M23 1l-2 2 2 2" stroke="#a01010" stroke-width="1.5" fill="none"/><circle cx="10" cy="3" r="1.5" fill="#a01010"/><path d="M0 25h10M10 25l12-12M22 25h10M23 23l-2 2 2 2" stroke="#2a7a4a" stroke-width="1.5" fill="none"/><circle cx="10" cy="25" r="1.5" fill="#2a7a4a"/></g><text x="1103" y="119" font-size="16" fill="#3a68b0" font-weight="normal" text-anchor="start" textLength="27" lengthAdjust="spacingAndGlyphs" >N-2</text><g transform="translate(1154,103)"><path d="M0 18c1-6 8-11 16-13 6-1 12-1 16 0v13c-8 3-20 4-31 2z" fill="#ddd" stroke="#999" stroke-width=".8"/><path d="M2 18c8 0 20-2 30-6v7c-8 2-20 3-29 2z" fill="#3a6ac0"/><path d="M8 9l8-3v3l-9 2z" fill="#555"/><path d="M20 6h4v3h-4zM26 6h5v3h-5z" fill="#667"/><path d="M4 22h26" stroke="#444" stroke-width="1.6"/></g><g transform="translate(1208,98)"><circle cx="3" cy="3" r="2.6" fill="#e01010"/><path d="M3 5v9M3 6l28 8" stroke="#1a8a1a" stroke-width="2.4" fill="none" stroke-linecap="round"/><text x="1" y="29" font-size="13" fill="#1a50e0" stroke="#1a50e0" stroke-width=".3" textLength="30" lengthAdjust="spacingAndGlyphs">VVO</text></g><g transform="translate(1251,98)"><circle cx="16" cy="6" r="5.5" fill="#fff" stroke="#333" stroke-width="1.2"/><circle cx="16" cy="6" r="3.5" fill="#d8eaf8" stroke="#2a70c8"/><path d="M16 6l2-2" stroke="#333"/><text x="0" y="29" font-size="12" font-weight="bold" fill="#2a50a8">P</text><path d="M16 15v11M13 23l3 3 3-3" stroke="#2a50a8" stroke-width="1.6" fill="none"/><text x="22" y="30" font-size="12" font-weight="bold" fill="#b01010">Q</text></g><g transform="translate(1293,97)"><circle cx="16.5" cy="16" r="16" fill="#888"/><circle cx="16.5" cy="16" r="14.5" fill="#5ab4ec"/><circle cx="16.5" cy="11" r="10" fill="#8cd0f8" opacity=".7"/><path d="M7 21a10 10 0 0 1 5-9" fill="none" stroke="#2a9a2a" stroke-width="2"/><path d="M12 12a10 10 0 0 1 10 0" fill="none" stroke="#e8d030" stroke-width="2"/><path d="M22 12a10 10 0 0 1 5 9" fill="none" stroke="#d02020" stroke-width="2"/><path d="M14 23l9-13" stroke="#e02020" stroke-width="1.4"/><circle cx="16.5" cy="20" r="1.2" fill="#fff"/></g><path d="M1331 126 h6 l-3 3z" fill="#6e6e6e"/><rect x="0" y="215" width="2" height="2" fill="#8c8c8c"/><rect x="4" y="215" width="2" height="2" fill="#8c8c8c"/><rect x="8" y="215" width="2" height="2" fill="#8c8c8c"/><rect x="12" y="215" width="2" height="2" fill="#8c8c8c"/><rect x="16" y="215" width="2" height="2" fill="#8c8c8c"/><rect x="20" y="215" width="2" height="2" fill="#8c8c8c"/><rect x="24" y="215" width="2" height="2" fill="#8c8c8c"/><rect x="28" y="215" width="2" height="2" fill="#8c8c8c"/><rect x="36" y="189" width="6" height="110" fill="#d4d4d4"/><g transform="translate(47,190)"><path d="M5 0l5 5-5 4-5-4z" fill="#2a70c8" transform="rotate(10 5 5)"/><circle cx="6" cy="13" r="2" fill="#7ab0e0"/><circle cx="6" cy="16" r="1.5" fill="#d02020"/></g><text transform="translate(49,205) rotate(90)" font-size="12" fill="#222" textLength="93" lengthAdjust="spacingAndGlyphs">System Manager</text><g transform="translate(0,225)"><rect x="0" y="1" width="8" height="5" fill="#f5d020" stroke="#666" stroke-width=".8"/><path d="M4 6v25M4 14h8M15 14v17M15 22h6M15 31h6" stroke="#666" fill="none"/><rect x="11" y="9" width="8" height="5" fill="#f5d020" stroke="#666" stroke-width=".8"/><rect x="22" y="18" width="8" height="5" fill="#f5d020" stroke="#666" stroke-width=".8"/><rect x="22" y="27" width="8" height="5" fill="#f5d020" stroke="#666" stroke-width=".8"/></g><rect x="0" y="261" width="33" height="36" fill="#bccde8"/><g transform="translate(0,262)"><circle cx="15" cy="6" r="4.5" fill="none" stroke="#222"/><path d="M13 4l2 2 2-2M15 6v3" stroke="#222" fill="none" stroke-width=".8"/><path d="M15 10v4M1 14h28" stroke="#222" stroke-width="1.2"/><path d="M7 14v3M7 31v3" stroke="#222"/><ellipse cx="7" cy="22" rx="5" ry="5" fill="none" stroke="#222"/><ellipse cx="7" cy="26" rx="5" ry="5" fill="none" stroke="#222"/><path d="M22 14v20" stroke="#c01010" stroke-width="1.2"/><path d="M16 22l3 2 3-2 3 2 3-2M16 26l3 2 3-2 3 2 3-2" stroke="#c01010" fill="none" stroke-width="1"/></g><g transform="translate(0,301)"><rect x="0" y="0" width="31" height="32" fill="#eef5ee"/><path d="M0 4h31M0 8h31M0 12h31M0 16h31M0 20h31M0 24h31M0 28h31M4 0v32M8 0v32M12 0v32M16 0v32M20 0v32M24 0v32M28 0v32" stroke="#b9d6c4" stroke-width=".5"/><path d="M2 0v5l6 7v14h9" fill="none" stroke="#1a50e0" stroke-width="2.5"/><path d="M8 0v5l6 8v9h6" fill="none" stroke="#b01818" stroke-width="1.2"/><path d="M24 0v32" stroke="#222"/><rect x="21" y="5" width="6" height="11" fill="#fff" stroke="#222"/></g><g transform="translate(0,339)"><rect x="0" y="0" width="31" height="32" fill="#eef5ee"/><path d="M0 4h31M0 8h31M0 12h31M0 16h31M0 20h31M0 24h31M0 28h31M4 0v32M8 0v32M12 0v32M16 0v32M20 0v32M24 0v32M28 0v32" stroke="#c9e0cf" stroke-width=".5"/><circle cx="16" cy="17" r="14" fill="none" stroke="#1a20e0" stroke-width="1.4"/><circle cx="13" cy="18" r="10" fill="none" stroke="#e02020" stroke-width="1.2"/><path d="M4 0v28h27" stroke="#111" fill="none"/><path d="M5 27l12-20" stroke="#2aa0e0"/></g><g transform="translate(1,378)"><rect x=".5" y=".5" width="28" height="29" fill="#ccc" stroke="#222"/><circle cx="8" cy="8" r="4.5" fill="#fff" stroke="#333"/><circle cx="8" cy="9" r="2" fill="#c01010"/><circle cx="21" cy="8" r="4.5" fill="#fff" stroke="#333"/><circle cx="21" cy="9" r="2" fill="#c01010"/><circle cx="8" cy="21" r="5.5" fill="#fff" stroke="#333"/><circle cx="7.5" cy="23" r="3.5" fill="#c01010"/><circle cx="21" cy="21" r="5.5" fill="#fff" stroke="#333"/></g><g transform="translate(2,416)"><path d="M1 24c0-12 4-20 8-20s3-4 8-4 4 4 8 4 4 10 3 22c-2-8-8-12-13-12s-11 4-14 14z" fill="#e8a0a0" opacity=".9"/><path d="M1 24c2-10 8-13 14-13s11 4 13 13" fill="none" stroke="#9ac0b0" stroke-width="2"/></g><g transform="translate(0,454)"><path d="M0 4l20 3c6 1 10 6 8 12s-8 8-12 6l-16-3z" fill="#777"/><path d="M0 6l18 3c4 1 7 5 6 9" fill="none" stroke="#aaa" stroke-width="1.5"/><path d="M14 13l12 5" stroke="#2f80d0" stroke-width="6" stroke-linecap="round"/><circle cx="27" cy="19" r="4" fill="#e01010"/></g><g transform="translate(2,492)"><path d="M0 1h26M0 30h26M4 1v8M21 1v6l-3 1 6 2-6 2 6 2-3 1v3M21 20v5M17 25h8M17 27h8M21 27v3M4 14v5M4 19l3 3v5M4 27v3" stroke="#333" fill="none"/><circle cx="7" cy="7" r="3.5" fill="#e01010"/><path d="M2 2l10 10M12 2l-10 10M7 0v14M0 7h14" stroke="#aaa" stroke-width=".6"/></g><g transform="translate(0,530)"><path d="M8 1h23M8 30h23M26 1v6l-3 1 6 2-6 2 6 2-3 1v3M26 20v5M22 25h8M22 27h8M26 27v3M14 14v4M9 18v6M14 24l-3-3M14 24v6" stroke="#1a3ae0" fill="none" stroke-width="1.3"/><circle cx="14" cy="7" r="3.5" fill="#f5c030" stroke="#e07010"/><path d="M0 4h4M2 2v4M0 28h4" stroke="#c03030" stroke-width="1.2"/></g><g transform="translate(0,567)"><rect x="0" y="0" width="31" height="31" fill="#ddd"/><path d="M0 5l12 10 19-6M12 15l4 16M16 16l12 15" stroke="#fff" stroke-width="3"/><path d="M0 8c8 2 10 8 16 10s10 6 12 13" stroke="#f5d030" stroke-width="3" fill="none"/><circle cx="20" cy="15" r="4" fill="#1a9a1a" stroke="#f5d030" stroke-width="2"/><rect x="0" y="20" width="8" height="11" fill="#1a9a1a" rx="3"/><rect x="2" y="2" width="6" height="6" fill="#f0a0a0"/><path d="M24 26h7v5h-7z" fill="#6ab0f0"/><rect x=".5" y=".5" width="30" height="30" fill="none" stroke="#555"/></g><g transform="translate(3,605)"><path d="M17 3c2-3 4-3 6-3M3 32c2 0 4-1 5-3" stroke="#8a1010" fill="none"/><rect x=".5" y="2.5" width="25" height="24" fill="#f8f4cc" stroke="#888"/><text x="13" y="12" font-size="9" text-anchor="middle" fill="#111">1</text><path d="M3 14h20" stroke="#111"/><text x="13" y="24" font-size="9" text-anchor="middle" fill="#111">S+1</text></g><g transform="translate(0,646)"><rect x="0" y="0" width="30" height="26" rx="2" fill="#4a4a4a"/><rect x="0" y="0" width="30" height="4" fill="#333"/><circle cx="2.5" cy="2" r="1" fill="#e33"/><circle cx="5.5" cy="2" r="1" fill="#ec3"/><circle cx="8.5" cy="2" r="1" fill="#3c3"/><path d="M3 8h5M3 12h5M3 16h5M3 20h5" stroke="#999" stroke-width="1.4"/><path d="M13 8h2M15 12h6M13 20h2" stroke="#e33" stroke-width="1.4"/><path d="M15 16h6" stroke="#e8a030" stroke-width="1.4"/><path d="M17 12h7" stroke="#bbb" stroke-width="1.4"/></g><g transform="translate(3,681)"><path d="M1 4l4 27h16l4-27z" fill="#3aa8e8" opacity=".9"/><ellipse cx="13" cy="4" rx="12" ry="3" fill="#bfe6fb" stroke="#2a90d0"/><path d="M9 14a5 5 0 0 1 9 2M17 22a5 5 0 0 1-9-2" stroke="#1a9a3a" stroke-width="2.5" fill="none"/></g><rect x="0" y="720" width="34" height="1" fill="#d0d0d0"/><g transform="translate(0,729)"><path d="M4 7v4h23v-4M15 7v10" stroke="#555" fill="none"/><rect x="0" y="0" width="8" height="7" fill="#f5d020" stroke="#777" stroke-width=".7"/><rect x="11" y="0" width="8" height="7" fill="#f5d020" stroke="#777" stroke-width=".7"/><rect x="22" y="0" width="8" height="7" fill="#f5d020" stroke="#777" stroke-width=".7"/><path d="M15 16l6 6-6 6-6-6z" fill="#e01010"/></g><g transform="translate(0,767)"><path d="M4 7v4h23v-4M15 7v10" stroke="#555" fill="none"/><path d="M4 0l4 4-4 4-4-4zM15 0l4 4-4 4-4-4zM26 0l4 4-4 4-4-4z" fill="#e01010"/><circle cx="15" cy="22" r="6" fill="#1a9a1a"/></g><g transform="translate(0,806)"><path d="M4 7v4h23v-4M15 7v10" stroke="#555" fill="none"/><circle cx="4" cy="4" r="4" fill="#1a9a1a"/><circle cx="15" cy="4" r="4" fill="#1a9a1a"/><circle cx="26" cy="4" r="4" fill="#1a9a1a"/><rect x="7" y="18" width="16" height="9" fill="#e07a20"/></g><path d="M0 842l3-2v4z" fill="#888"/><rect x="1878" y="189" width="2" height="2" fill="#8c8c8c"/><rect x="1882" y="189" width="2" height="2" fill="#8c8c8c"/><rect x="1886" y="189" width="2" height="2" fill="#8c8c8c"/><rect x="1890" y="189" width="2" height="2" fill="#8c8c8c"/><rect x="1894" y="189" width="2" height="2" fill="#8c8c8c"/><rect x="1898" y="189" width="2" height="2" fill="#8c8c8c"/><rect x="1902" y="189" width="2" height="2" fill="#8c8c8c"/><rect x="1906" y="189" width="2" height="2" fill="#8c8c8c"/><g transform="translate(1879,198)"><rect x=".5" y=".5" width="30" height="29" rx="3" fill="#0a8a0a" stroke="#111"/><path d="M2 5h28M2 9h28M2 13h28M2 17h28M2 21h28M2 25h28M5 2v26M9 2v26M13 2v26M17 2v26M21 2v26M25 2v26" stroke="#111" stroke-width=".7"/><path d="M2 15h28" stroke="#888" stroke-width="1"/><path d="M2 14l5-10 3 6 3-6 5 13 3 6 3-6 3-2" stroke="#3ad0f0" fill="none" stroke-width="1.1"/></g><g transform="translate(1879,233)"><rect x=".5" y=".5" width="30" height="29" rx="3" fill="#0a8a0a" stroke="#111"/><path d="M2 5h28M2 9h28M2 13h28M2 17h28M2 21h28M2 25h28M5 2v26M9 2v26M13 2v26M17 2v26M21 2v26M25 2v26" stroke="#111" stroke-width=".7"/><path d="M2 26l9-10 1-10 2 10 5 5 5-4 2-8 1 6 3-3" stroke="#3ad0f0" fill="none" stroke-width="1.1"/></g><g transform="translate(1879,267)"><path d="M0 30l6-16h14l-4 16z" fill="#8ab4e0" stroke="#6a90b8"/><path d="M3 22h15M2 26h15M10 14l-3 16M15 14l-3 16" stroke="#fff" stroke-width=".8"/><path d="M8 30v2M16 30v2" stroke="#777"/><circle cx="24" cy="11" r="9" fill="none" stroke="#aaa" stroke-width="1.4"/><path d="M24 0v32" stroke="#8ab4e0" stroke-width="2"/><path d="M24 11l8-6M24 11l-6-8" stroke="#aaa" stroke-width="1.4"/><path d="M2 6l2 2M8 1l2 2" stroke="#777" stroke-width="1.5"/></g><g transform="translate(1879,302)"><circle cx="14" cy="15" r="13.5" fill="#fff" stroke="#aaa" stroke-width="1.2"/><circle cx="14" cy="15" r="10" fill="none" stroke="#c8b0e0" stroke-width=".8" stroke-dasharray="8 4"/><circle cx="14" cy="15" r="2.5" fill="#fff" stroke="#888" stroke-width="1.2"/><path d="M12 13l-6-7" stroke="#888" stroke-width="1.2"/><path d="M24 22c0-4 5-4 5 0l-1 3v3h-3v-3z" fill="#fff" stroke="#f5c060"/></g><g transform="translate(1879,340)"><rect x=".5" y=".5" width="28" height="19" rx="1" fill="#eee" stroke="#999"/><rect x="2" y="2" width="25" height="16" fill="#2a5aa8"/><circle cx="14" cy="10" r="6" fill="none" stroke="#fff" stroke-width="1.1"/><path d="M14 10v6M14 10l-5-3M14 10l5-3" stroke="#fff" stroke-width="1.1"/><path d="M10 20l-1 4h12l-1-4" fill="#ddd" stroke="#999"/><rect x="5" y="24" width="19" height="3" rx="1" fill="#eee" stroke="#999"/></g><g transform="translate(1879,374)"><path d="M6 21c2-2 2-14 9-15 7 1 7 13 9 15l4 3h-26z" fill="#e0a830" stroke="#b07a10"/><ellipse cx="15" cy="24" rx="14" ry="2.5" fill="#c89020"/><circle cx="15" cy="3" r="2" fill="#d09a20"/><circle cx="15" cy="26" r="2.5" fill="#a05010"/><path d="M2 12l2 3M1 17l2 2M28 12l-2 3M29 17l-2 2" stroke="#e02020" stroke-width="1.2"/><ellipse cx="15" cy="29" rx="13" ry="1.5" fill="#ddd"/></g><g transform="translate(1879,408)"><rect x="5.5" y=".5" width="22" height="27" fill="#fff" stroke="#aaa"/><rect x="6" y="26" width="22" height="2" fill="#999"/><path d="M10 5h14M10 8h14M10 11h14" stroke="#555"/><ellipse cx="16" cy="19" rx="7" ry="5" fill="#e01010"/><path d="M16 19h7a7 5 0 0 0-3-4z" fill="#2a70c8"/></g><g transform="translate(1879,443)"><path d="M1 0v28h29" stroke="#333" fill="none"/><path d="M2 28v2M6 28v2M10 28v2M14 28v2M18 28v2M22 28v2M26 28v2" stroke="#333"/><rect x="4" y="14" width="6" height="14" fill="#4a80d8" stroke="#2a50a0" stroke-width=".6"/><rect x="12" y="5" width="7" height="23" fill="#e03030" stroke="#a01010" stroke-width=".6"/><rect x="14" y="8" width="3" height="19" fill="#e8b030"/><rect x="21" y="11" width="7" height="17" fill="#5ab84a" stroke="#2a8a2a" stroke-width=".6"/><rect x="23" y="13" width="3" height="14" fill="#e8d060"/></g><g transform="translate(1879,477)"><circle cx="12" cy="12" r="11" fill="#fff" stroke="#2a6aa8" stroke-width="2.4"/><rect x="7" y="6" width="3" height="8" fill="#e8a030"/><rect x="11" y="4" width="3" height="10" fill="#2a80d0"/><rect x="15" y="8" width="3" height="6" fill="#5ab84a"/><path d="M4 16h4l2-3 2 5 2-4 2 2h4" stroke="#2a90e0" fill="none"/><path d="M19 19l9 9" stroke="#e8a030" stroke-width="3"/><path d="M10 24v6M13 24v6" stroke="#5ab84a"/><path d="M24 10h6M24 14h6" stroke="#b8d8c0" stroke-width="2"/></g><g transform="translate(1879,514)"><path d="M9 1h12l8 8v11l-8 8h-12l-8-8v-11z" fill="#e87878" stroke="#c8c8c8" stroke-width="1.5"/><path d="M9 8l12 12M21 8l-12 12" stroke="#fff" stroke-width="3.5"/></g><g transform="translate(1879,547)"><circle cx="9" cy="7" r="6.5" fill="#fff" stroke="#777"/><circle cx="9" cy="7" r="4.5" fill="#cfe4f8" stroke="#2a70c8"/><path d="M9 7l-3-3" stroke="#333"/><rect x="1.5" y="17.5" width="14" height="9" fill="#cfe8fb" stroke="#999"/><path d="M4 29h9" stroke="#999" stroke-width="1.5"/><path d="M20 18l8-6v18h-9z" fill="#6a9ad0"/></g><g transform="translate(1879,583)"><ellipse cx="9" cy="2.5" rx="6" ry="2.5" fill="#f8e8b0" stroke="#c8a040"/><path d="M3 2.5v11c0 3 12 3 12 0v-11" fill="#f8e8b0" stroke="#c8a040"/><path d="M3 7c0 3 12 3 12 0M3 11c0 3 12 3 12 0" stroke="#c8a040" fill="none"/><rect x="1.5" y="17.5" width="14" height="9" fill="#cfe8fb" stroke="#999"/><path d="M4 29h9" stroke="#999" stroke-width="1.5"/><path d="M20 18l8-6v18h-9z" fill="#6a9ad0"/></g><rect x="67.5" y="186.5" width="1807" height="767" fill="#fff" stroke="#d4d4d4"/><rect x="69.5" y="188.5" width="1803" height="763" fill="none" stroke="#1565cf" stroke-width="1"/><rect x="70" y="189" width="1802" height="30" fill="#d9d9d9"/><rect x="79" y="198" width="16" height="16" fill="#e4f2e4" stroke="#a6e0a6" stroke-width="1"/><path d="M81 208l3-6 3 8 3-7 3 6" fill="none" stroke="#e07a2a" stroke-width="1" stroke-dasharray="1.5 1"/><path d="M81 204l3 6 3-7 3 8 3-6" fill="none" stroke="#1a8aa0" stroke-width="1" stroke-dasharray="1.5 1"/><text x="103" y="211" font-size="11" fill="#222" font-weight="normal" text-anchor="start" textLength="355" lengthAdjust="spacingAndGlyphs" >ULF View-&gt;Substation1 | Unbalanced Harmonic Analysis | AHF inTime</text><rect x="1778" y="201" width="8" height="2" fill="#555"/><rect x="1814.5" y="195.5" width="8" height="8" fill="none" stroke="#555"/><rect x="1814" y="195" width="9" height="2" fill="#555"/><path d="M1851 195l8 8M1859 195l-8 8" stroke="#555" stroke-width="1.2"/><rect x="77" y="219" width="1787" height="1" fill="#959595"/><rect x="77" y="220" width="1787" height="1" fill="#6b6b6b"/><rect x="77" y="219" width="2" height="724" fill="#6b6b6b"/><rect x="1846" y="221" width="18" height="722" fill="#f0f0f0"/><rect x="79" y="925" width="1785" height="18" fill="#f0f0f0"/><rect x="1863" y="221" width="1" height="722" fill="#e2e2e2"/><rect x="79" y="942" width="1785" height="1" fill="#e2e2e2"/><rect x="1854" y="238" width="2" height="17" fill="#8a8a8a"/><rect x="95" y="933" width="17" height="2" fill="#8a8a8a"/><rect x="1858" y="932" width="2" height="2" fill="#a0a0a0"/><rect x="1855" y="935" width="2" height="2" fill="#a0a0a0"/><rect x="1858" y="935" width="2" height="2" fill="#a0a0a0"/><rect x="1852" y="938" width="2" height="2" fill="#a0a0a0"/><rect x="1855" y="938" width="2" height="2" fill="#a0a0a0"/><rect x="1858" y="938" width="2" height="2" fill="#a0a0a0"/><defs><pattern id="grid" x="3" y="1" width="16" height="16" patternUnits="userSpaceOnUse"><rect x="0" y="0" width="16" height="16" fill="#fff"/><rect x="0" y="0" width="1" height="16" fill="#fdf5ef"/><rect x="0" y="0" width="16" height="1" fill="#fdf5ef"/></pattern><clipPath id="cv"><rect x="79" y="221" width="1767" height="704"/></clipPath></defs><rect x="79" y="221" width="1767" height="704" fill="url(#grid)"/><g clip-path="url(#cv)"><rect x="187" y="221" width="1" height="41" fill="#000"/><path d="M170 261 a4.3 4.3 0 0 0 8.6 0 a4.3 4.3 0 0 0 8.6 0 a4.3 4.3 0 0 0 8.6 0 a4.3 4.3 0 0 0 8.6 0" fill="none" stroke="#111" stroke-width="1.2"/><path d="M170 278 a4.3 4.3 0 0 1 8.6 0 a4.3 4.3 0 0 1 8.6 0 a4.3 4.3 0 0 1 8.6 0 a4.3 4.3 0 0 1 8.6 0" fill="none" stroke="#111" stroke-width="1.2"/><rect x="187" y="274" width="1" height="189" fill="#000"/><path d="M151.5 250.5 L157.5 239.5 L163.5 250.5z" fill="none" stroke="#1a8a1a" stroke-width="1.1"/><path d="M144 284l6 3 6-3M150 287v6M150 287h16.5v13" fill="none" stroke="#3a9a3a" stroke-width="1.2"/><path d="M162 300.5h9M163.5 302.5h6M165 304.5h3" stroke="#3a9a3a"/><text x="213" y="258" font-size="8.6" fill="#0000ff" font-weight="bold" text-anchor="start" textLength="24" lengthAdjust="spacingAndGlyphs" >TR:10</text><text x="212" y="271" font-size="8.6" fill="#0000ff" font-weight="bold" text-anchor="start" textLength="26" lengthAdjust="spacingAndGlyphs" >1 MVA</text><rect x="187" y="336" width="1" height="28" fill="#fff"/><path d="M187.5 335 L183.0 338.5 L191.5 341 L185.5 343.5 C187.5 345 187.0 347 188.0 348.5 C191.5 350 191.5 361 187.5 364" fill="none" stroke="#000" stroke-width="1.2"/><ellipse cx="187.0" cy="354" rx="2.6" ry="1.9" fill="none" stroke="#000" stroke-width="1.2"/><ellipse cx="187.0" cy="359" rx="2.6" ry="1.9" fill="none" stroke="#000" stroke-width="1.2"/><rect x="187" y="411" width="1" height="6" fill="#fff"/><path d="M190.0 407.5 Q197.5 414 190.0 420.5" fill="none" stroke="#000" stroke-width="1.1"/><path d="M187.5 431 C182.5 432 182.5 440.0 187.5 441.0 C182.5 442.0 182.5 450 187.5 451" fill="none" stroke="#000" stroke-width="1"/><rect x="186" y="431" width="3" height="20" fill="#000"/><rect x="187" y="441" width="33" height="1" fill="#000"/><circle cx="230" cy="441" r="9.6" fill="#fff" stroke="#000" stroke-width="1.1"/><text x="230" y="444" font-size="8.5" fill="#111" font-weight="normal" text-anchor="middle" textLength="17" lengthAdjust="spacingAndGlyphs" >OCR</text><text x="195.5" y="339" font-size="8.6" fill="#0000ff" font-weight="bold" text-anchor="start" textLength="28" lengthAdjust="spacingAndGlyphs" >Cable3</text><text x="195.5" y="363" font-size="8.6" fill="#0000ff" font-weight="bold" text-anchor="start" textLength="38.5" lengthAdjust="spacingAndGlyphs" >3-3/C 4/0</text><rect x="315" y="221" width="1" height="20" fill="#000"/><rect x="309" y="241" width="12" height="1.2" fill="#000"/><path d="M309 246 q6 -2.5 12 0" fill="none" stroke="#111" stroke-width="1.2"/><rect x="315" y="245" width="1" height="9" fill="#000"/><path d="M312 253h6l-3 3z" fill="#111"/><text x="303" y="274" font-size="8.6" fill="#0000ff" font-weight="bold" text-anchor="start" textLength="21.5" lengthAdjust="spacingAndGlyphs" >CAP1</text><text x="296" y="283" font-size="8.6" fill="#8c8cff" font-weight="normal" text-anchor="start" textLength="45" lengthAdjust="spacingAndGlyphs" >1x0.3 Mvar</text><rect x="491" y="221" width="1" height="16" fill="#000"/><rect x="485" y="237" width="12" height="1" fill="#000"/><path d="M485 242 q6 -2.5 12 0" fill="none" stroke="#111" stroke-width="1.2"/><rect x="491" y="241" width="1" height="9" fill="#000"/><path d="M488 249h6l-3 3z" fill="#111"/><text x="452.5" y="247" font-size="8.6" fill="#0000ff" font-weight="bold" text-anchor="start" textLength="21.5" lengthAdjust="spacingAndGlyphs" >CAP2</text><text x="437" y="264" font-size="8.6" fill="#0000ff" font-weight="bold" text-anchor="start" textLength="45" lengthAdjust="spacingAndGlyphs" >1x0.3 Mvar</text><text x="572" y="223" font-size="8.6" fill="#0000ff" font-weight="bold" text-anchor="start" textLength="24" lengthAdjust="spacingAndGlyphs" >TR:11</text><text x="571" y="233" font-size="8.6" fill="#0000ff" font-weight="bold" text-anchor="start" textLength="26" lengthAdjust="spacingAndGlyphs" >1 MVA</text><path d="M610 230 a4.3 4.3 0 0 1 8.6 0 a4.3 4.3 0 0 1 8.6 0 a4.3 4.3 0 0 1 8.6 0 a4.3 4.3 0 0 1 8.6 0" fill="none" stroke="#111" stroke-width="1.2"/><rect x="627" y="226" width="1" height="237" fill="#000"/><path d="M644 234l6 3 6-3M650 237v6M650 237h16.5v13" fill="none" stroke="#3a9a3a" stroke-width="1.2"/><path d="M662 250.5h9M663.5 252.5h6M665 254.5h3" stroke="#3a9a3a"/><rect x="627" y="344" width="1" height="28" fill="#fff"/><path d="M627.5 343 L623.0 346.5 L631.5 349 L625.5 351.5 C627.5 353 627.0 355 628.0 356.5 C631.5 358 631.5 369 627.5 372" fill="none" stroke="#000" stroke-width="1.2"/><ellipse cx="627.0" cy="362" rx="2.6" ry="1.9" fill="none" stroke="#000" stroke-width="1.2"/><ellipse cx="627.0" cy="367" rx="2.6" ry="1.9" fill="none" stroke="#000" stroke-width="1.2"/><rect x="627" y="401.5" width="1" height="6" fill="#fff"/><path d="M630.0 398.0 Q637.5 404.5 630.0 411.0" fill="none" stroke="#000" stroke-width="1.1"/><path d="M627.5 430 C622.5 431 622.5 438.5 627.5 439.5 C622.5 440.5 622.5 448 627.5 449" fill="none" stroke="#000" stroke-width="1"/><rect x="626" y="430" width="3" height="19" fill="#000"/><rect x="627" y="439" width="24.5" height="1" fill="#000"/><circle cx="661.5" cy="439.5" r="9.6" fill="#fff" stroke="#000" stroke-width="1.1"/><text x="661.5" y="442.5" font-size="8.5" fill="#111" font-weight="normal" text-anchor="middle" textLength="17" lengthAdjust="spacingAndGlyphs" >OCR</text><text x="641" y="358" font-size="8.6" fill="#0000ff" font-weight="bold" text-anchor="start" textLength="28" lengthAdjust="spacingAndGlyphs" >Cable2</text><text x="641.5" y="371" font-size="8.6" fill="#0000ff" font-weight="bold" text-anchor="start" textLength="39.5" lengthAdjust="spacingAndGlyphs" >3-3/C 262</text><rect x="79" y="461.8" width="328" height="3.6" fill="#000"/><rect x="483" y="461.8" width="774" height="3.6" fill="#000"/><text x="450" y="463" font-size="8.6" fill="#0000ff" font-weight="bold" text-anchor="start" textLength="28" lengthAdjust="spacingAndGlyphs" >Bus 2B</text><circle cx="91.5" cy="463.5" r="3" fill="#000"/><circle cx="171.5" cy="463.5" r="3" fill="#000"/><circle cx="187.5" cy="463.5" r="3" fill="#000"/><circle cx="259.5" cy="463.5" r="3" fill="#000"/><circle cx="328.5" cy="463.5" r="3" fill="#000"/><circle cx="377.5" cy="463.5" r="3" fill="#000"/><circle cx="523.5" cy="463.5" r="3" fill="#000"/><circle cx="571.5" cy="463.5" r="3" fill="#000"/><circle cx="627.5" cy="463.5" r="3" fill="#000"/><circle cx="667.5" cy="463.5" r="3" fill="#000"/><circle cx="779.5" cy="463.5" r="3" fill="#000"/><circle cx="907.5" cy="463.5" r="3" fill="#000"/><circle cx="1011.5" cy="463.5" r="3" fill="#000"/><circle cx="1107.5" cy="463.5" r="3" fill="#000"/><circle cx="1235.5" cy="463.5" r="3" fill="#000"/><rect x="91" y="463" width="1" height="117" fill="#000"/><rect x="91" y="492.5" width="1" height="6" fill="#fff"/><path d="M94.0 489.0 Q101.5 495.5 94.0 502.0" fill="none" stroke="#000" stroke-width="1.1"/><rect x="91" y="532.5" width="1" height="13.5" fill="#fff"/><path d="M91.5 532.2 A3.3 3.3 0 1 1 88.2 535.8 M94.8 542.5 A3.3 3.3 0 1 0 91.5 546" fill="none" stroke="#000" stroke-width="1.1"/><circle cx="91.5" cy="590" r="10" fill="#fff" stroke="#000" stroke-width="1.1"/><text x="79" y="614" font-size="8.6" fill="#0000ff" font-weight="bold" text-anchor="start" textLength="37" lengthAdjust="spacingAndGlyphs" >denser A</text><text x="66.3" y="625" font-size="8.6" fill="#0000ff" font-weight="bold" text-anchor="start" textLength="38.7" lengthAdjust="spacingAndGlyphs" >5x50 HP</text><rect x="171" y="463" width="1" height="116.5" fill="#000"/><rect x="169.5" y="493.5" width="4" height="12" fill="#fff" stroke="#000" stroke-width="1"/><rect x="171" y="493" width="1" height="13" fill="#000" opacity=".5"/><circle cx="171.5" cy="589.5" r="10" fill="#fff" stroke="#000" stroke-width="1.1"/><text x="156" y="615" font-size="8.6" fill="#0000ff" font-weight="bold" text-anchor="start" textLength="30" lengthAdjust="spacingAndGlyphs" >HVAC 2</text><text x="158" y="631" font-size="8.6" fill="#0000ff" font-weight="bold" text-anchor="start" textLength="23" lengthAdjust="spacingAndGlyphs" >15 HP</text><rect x="259" y="463" width="1" height="118" fill="#000"/><rect x="257.5" y="497.5" width="4" height="12" fill="#fff" stroke="#000" stroke-width="1"/><rect x="259" y="497" width="1" height="13" fill="#000" opacity=".5"/><circle cx="259.5" cy="591.4" r="10" fill="#fff" stroke="#000" stroke-width="1.1"/><path d="M252.5 584.4L266.5 598.4M266.5 584.4L252.5 598.4" stroke="#000" stroke-width="1"/><text x="219" y="617" font-size="8.6" fill="#0000ff" font-weight="bold" text-anchor="start" textLength="57" lengthAdjust="spacingAndGlyphs" >Fire Control A</text><text x="248" y="626" font-size="8.6" fill="#9a9aff" font-weight="normal" text-anchor="start" textLength="18" lengthAdjust="spacingAndGlyphs" >1 HP</text><rect x="328" y="463" width="1" height="24" fill="#000"/><rect x="328" y="487" width="1" height="3" fill="#b8b8b8"/><rect x="328" y="494" width="1" height="6" fill="#fff"/><path d="M331.0 490.5 Q338.5 497 331.0 503.5" fill="none" stroke="#b8b8b8" stroke-width="1.1"/><rect x="324" y="516" width="1" height="27" fill="#b8b8b8"/><rect x="324" y="544" width="1" height="28" fill="#fff"/><path d="M324.5 543 L320.0 546.5 L328.5 549 L322.5 551.5 C324.5 553 324.0 555 325.0 556.5 C328.5 558 328.5 569 324.5 572" fill="none" stroke="#b8b8b8" stroke-width="1.2"/><ellipse cx="324.0" cy="562" rx="2.6" ry="1.9" fill="none" stroke="#b8b8b8" stroke-width="1.2"/><ellipse cx="324.0" cy="567" rx="2.6" ry="1.9" fill="none" stroke="#b8b8b8" stroke-width="1.2"/><rect x="324" y="572" width="1" height="29" fill="#b8b8b8"/><rect x="324" y="601" width="107" height="1" fill="#b8b8b8"/><text x="318" y="515" font-size="9" fill="#000" font-weight="normal" text-anchor="start" textLength="21" lengthAdjust="spacingAndGlyphs" >Open</text><text x="337" y="557" font-size="8.6" fill="#a8a8a8" font-weight="bold" text-anchor="start" textLength="27" lengthAdjust="spacingAndGlyphs" >Cable5</text><text x="337" y="570" font-size="8.6" fill="#a8a8a8" font-weight="normal" text-anchor="start" textLength="40" lengthAdjust="spacingAndGlyphs" >3-3/C 262</text><rect x="377" y="463" width="1" height="44.5" fill="#000"/><rect x="377" y="507" width="55" height="1" fill="#000"/><path d="M436.5 509 Q443.5 518 450.5 509" fill="none" stroke="#c8c8c8" stroke-width="1.1"/><path d="M432 507.5h23" stroke="#e8e8e8" stroke-width="1"/><rect x="455" y="508" width="68" height="1" fill="#000"/><rect x="523" y="463" width="1" height="46" fill="#000"/><text x="436" y="530" font-size="9" fill="#000" font-weight="normal" text-anchor="start" textLength="21" lengthAdjust="spacingAndGlyphs" >Open</text><rect x="571" y="463" width="1" height="138" fill="#000"/><rect x="571" y="497.5" width="1" height="6" fill="#fff"/><path d="M574.0 494.0 Q581.5 500.5 574.0 507.0" fill="none" stroke="#000" stroke-width="1.1"/><rect x="571" y="528" width="1" height="28" fill="#fff"/><path d="M571.5 527 L567.0 530.5 L575.5 533 L569.5 535.5 C571.5 537 571.0 539 572.0 540.5 C575.5 542 575.5 553 571.5 556" fill="none" stroke="#000" stroke-width="1.2"/><ellipse cx="571.0" cy="546" rx="2.6" ry="1.9" fill="none" stroke="#000" stroke-width="1.2"/><ellipse cx="571.0" cy="551" rx="2.6" ry="1.9" fill="none" stroke="#000" stroke-width="1.2"/><rect x="455" y="601" width="116" height="1" fill="#000"/><text x="585" y="542" font-size="8.6" fill="#0000ff" font-weight="bold" text-anchor="start" textLength="27" lengthAdjust="spacingAndGlyphs" >Cable4</text><text x="585" y="555" font-size="8.6" fill="#0000ff" font-weight="bold" text-anchor="start" textLength="40" lengthAdjust="spacingAndGlyphs" >3-3/C 262</text><rect x="431.5" y="589.5" width="24" height="24" fill="#fff" stroke="#ff80ff" stroke-width="1"/><rect x="434.5" y="592.5" width="18" height="18" fill="none" stroke="#ff80ff" stroke-width="1"/><path d="M435 602l8 8M435 596l14 14M439 593l13 13M445 593l7 7M443 593l-8 8M449 593l-14 14M452 596l-13 13M452 602l-7 7" stroke="#ff80ff" stroke-width=".8"/><text x="416" y="626" font-size="8.6" fill="#000" font-weight="bold" text-anchor="start" textLength="50" lengthAdjust="spacingAndGlyphs" >Data Center</text><line x1="667.5" y1="466" x2="667.5" y2="502" stroke="#0f8a8a" stroke-width="1" stroke-dasharray="4 2"/><rect x="667" y="502" width="1" height="22" fill="#000"/><rect x="667" y="509" width="1" height="6" fill="#fff"/><path d="M670.0 505.5 Q677.5 512 670.0 518.5" fill="none" stroke="#000" stroke-width="1.1"/><line x1="667.5" y1="524" x2="667.5" y2="601" stroke="#0f8a8a" stroke-width="1" stroke-dasharray="4 2"/><circle cx="667" cy="611" r="9.5" fill="#fff" stroke="#111" stroke-width="1.2"/><path d="M659.5 607h15l-7.5 11z" fill="none" stroke="#111" stroke-width="1.1"/><rect x="667" y="601" width="1" height="6" fill="#000"/><text x="639" y="636" font-size="8.6" fill="#0000ff" font-weight="bold" text-anchor="start" textLength="57" lengthAdjust="spacingAndGlyphs" >Receptacles B</text><text x="648" y="648" font-size="8.6" fill="#0000ff" font-weight="bold" text-anchor="start" textLength="28" lengthAdjust="spacingAndGlyphs" >80 kVA</text><rect x="779" y="463" width="1" height="135" fill="#000"/><rect x="779" y="509" width="1" height="6" fill="#fff"/><path d="M782.0 505.5 Q789.5 512 782.0 518.5" fill="none" stroke="#000" stroke-width="1.1"/><rect x="779" y="550.5" width="1" height="13.5" fill="#fff"/><path d="M779.5 550.2 A3.3 3.3 0 1 1 776.2 553.8 M782.8 560.5 A3.3 3.3 0 1 0 779.5 564" fill="none" stroke="#000" stroke-width="1.1"/><circle cx="779.5" cy="608" r="10" fill="#fff" stroke="#000" stroke-width="1.1"/><text x="753" y="634" font-size="8.6" fill="#0000ff" font-weight="bold" text-anchor="start" textLength="52" lengthAdjust="spacingAndGlyphs" >Condenser B</text><text x="759" y="647" font-size="8.6" fill="#0000ff" font-weight="bold" text-anchor="start" textLength="33" lengthAdjust="spacingAndGlyphs" >5x60 HP</text><line x1="907.5" y1="466" x2="907.5" y2="499" stroke="#0f8a8a" stroke-width="1" stroke-dasharray="4 2"/><rect x="907" y="499" width="1" height="21" fill="#000"/><rect x="905.5" y="502.5" width="4" height="13" fill="#fff" stroke="#000" stroke-width="1"/><rect x="907" y="502" width="1" height="14" fill="#000" opacity=".5"/><line x1="907.5" y1="520" x2="907.5" y2="599" stroke="#0f8a8a" stroke-width="1" stroke-dasharray="4 2"/><path d="M897 599.5h20l-10 13z" fill="#fff" stroke="#111" stroke-width="1.2"/><text x="882" y="630" font-size="8.6" fill="#0000ff" font-weight="bold" text-anchor="start" textLength="33" lengthAdjust="spacingAndGlyphs" >Lighting</text><text x="887" y="643" font-size="8.6" fill="#0000ff" font-weight="bold" text-anchor="start" textLength="28" lengthAdjust="spacingAndGlyphs" >30 kVA</text><rect x="1011" y="463" width="1" height="131" fill="#000"/><rect x="1009.5" y="502.5" width="4" height="13" fill="#fff" stroke="#000" stroke-width="1"/><rect x="1011" y="502" width="1" height="14" fill="#000" opacity=".5"/><circle cx="1011.5" cy="603.6" r="10" fill="#fff" stroke="#000" stroke-width="1.1"/><path d="M1004.5 596.6L1018.5 610.6M1018.5 596.6L1004.5 610.6" stroke="#000" stroke-width="1"/><text x="976" y="630" font-size="8.6" fill="#0000ff" font-weight="bold" text-anchor="start" textLength="56" lengthAdjust="spacingAndGlyphs" >Fire Control B</text><text x="995" y="639" font-size="8.6" fill="#0000ff" font-weight="bold" text-anchor="start" textLength="19" lengthAdjust="spacingAndGlyphs" >5 HP</text><line x1="1107.5" y1="466" x2="1107.5" y2="486" stroke="#0f8a8a" stroke-width="1" stroke-dasharray="4 2"/><rect x="1107" y="486" width="1" height="24" fill="#000"/><rect x="1105.5" y="491.5" width="4" height="12" fill="#fff" stroke="#000" stroke-width="1"/><rect x="1107" y="491" width="1" height="13" fill="#000" opacity=".5"/><line x1="1107.5" y1="510" x2="1107.5" y2="594" stroke="#0f8a8a" stroke-width="1" stroke-dasharray="4 2"/><circle cx="1107.5" cy="604.2" r="10" fill="#fff" stroke="#000" stroke-width="1.1"/><text x="1092" y="629" font-size="8.6" fill="#0000ff" font-weight="bold" text-anchor="start" textLength="30" lengthAdjust="spacingAndGlyphs" >HVAC 3</text><text x="1094" y="645" font-size="8.6" fill="#0000ff" font-weight="bold" text-anchor="start" textLength="28" lengthAdjust="spacingAndGlyphs" >175 HP</text><rect x="1235" y="463" width="1" height="133" fill="#000"/><rect x="1235" y="514" width="1" height="6" fill="#fff"/><path d="M1238.0 510.5 Q1245.5 517 1238.0 523.5" fill="none" stroke="#000" stroke-width="1.1"/><circle cx="1235.5" cy="605" r="22" fill="#c0f2f6"/><rect x="1235" y="580" width="1" height="16" fill="#000"/><circle cx="1235.5" cy="596" r="1.8" fill="#e02020"/><rect x="1227.5" y="599.5" width="13" height="17" fill="none" stroke="#e02020" stroke-width="1.1"/><rect x="1240.5" y="601.5" width="4" height="13" fill="none" stroke="#e02020" stroke-width="1"/><path d="M1235 598v5M1235 603l-4 5 4 4M1235 603v9" fill="none" stroke="#e02020" stroke-width="1"/><text x="1254" y="609" font-size="8.6" fill="#e01010" font-weight="bold" text-anchor="start" textLength="22" lengthAdjust="spacingAndGlyphs" >AHF1</text><text x="736" y="235" font-size="8.6" fill="#0000ff" font-weight="bold" text-anchor="start" textLength="32" lengthAdjust="spacingAndGlyphs" >Pump A</text><text x="735.5" y="247" font-size="8.6" fill="#0000ff" font-weight="bold" text-anchor="start" textLength="28.5" lengthAdjust="spacingAndGlyphs" >450 HP</text><text x="844" y="235" font-size="8.6" fill="#0000ff" font-weight="bold" text-anchor="start" textLength="31.5" lengthAdjust="spacingAndGlyphs" >Pump B</text><text x="844" y="247" font-size="8.6" fill="#0000ff" font-weight="bold" text-anchor="start" textLength="28.5" lengthAdjust="spacingAndGlyphs" >500 HP</text><text x="935.5" y="235" font-size="8.6" fill="#0000ff" font-weight="bold" text-anchor="start" textLength="31.5" lengthAdjust="spacingAndGlyphs" >Pump C</text><text x="935.5" y="247" font-size="8.6" fill="#0000ff" font-weight="bold" text-anchor="start" textLength="28.5" lengthAdjust="spacingAndGlyphs" >500 HP</text><rect x="186" y="309" width="3" height="1" fill="#000"/><rect x="626" y="316" width="3" height="1" fill="#000"/></g>
</svg></body></html>
